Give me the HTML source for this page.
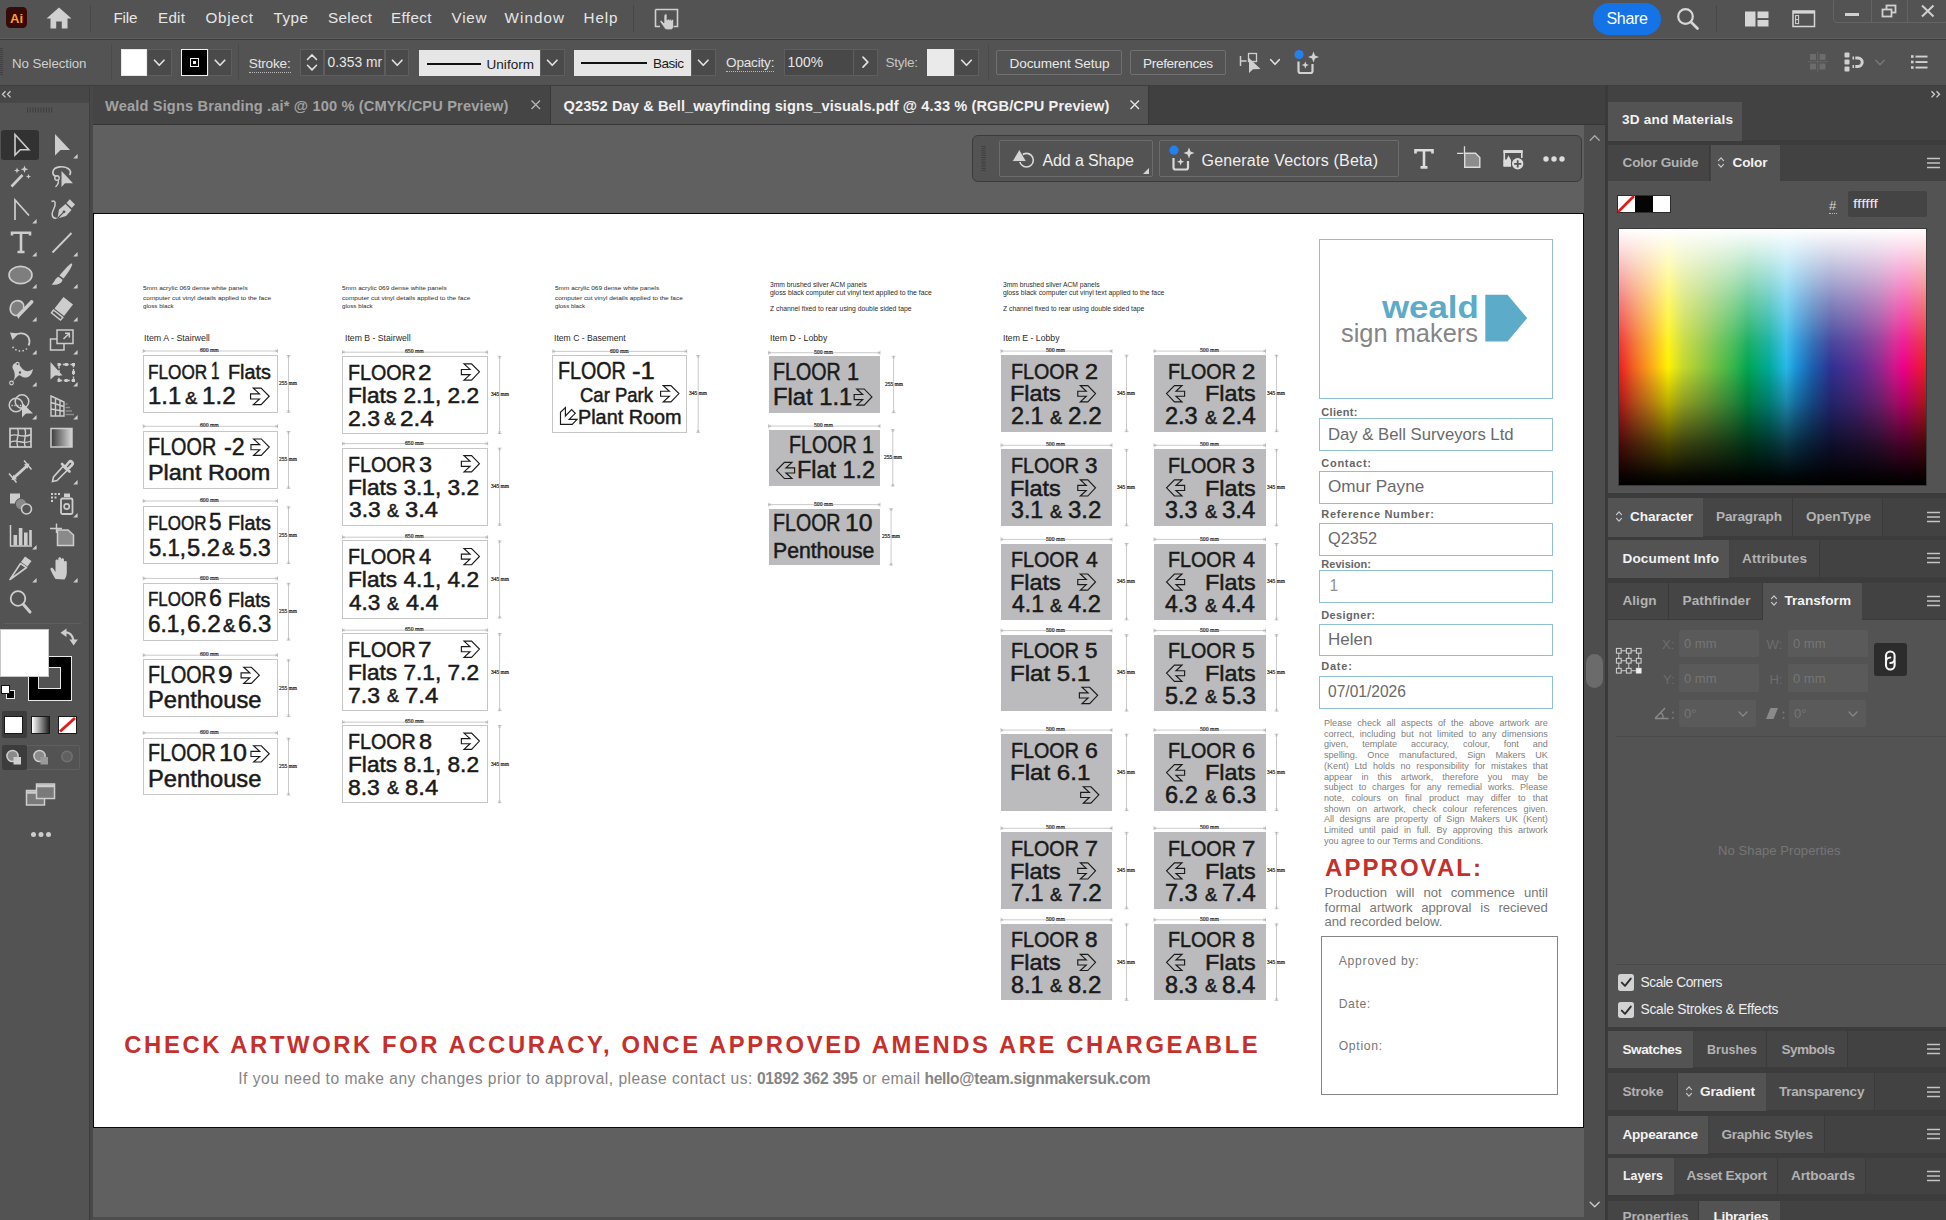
<!DOCTYPE html>
<html lang="en"><head><meta charset="utf-8"><title>Adobe Illustrator</title><style>
html,body{margin:0;padding:0}
body{width:1946px;height:1220px;overflow:hidden;background:#606060;position:relative;font-family:"Liberation Sans",sans-serif;}
.t{position:absolute;white-space:nowrap;line-height:1;}
.r{position:absolute;box-sizing:border-box;}
svg.r{overflow:visible}
</style></head><body>
<div class="r" style="left:0.00px;top:0.00px;width:1946.00px;height:38.00px;background:#535353;"></div>
<div class="r" style="left:0.00px;top:38.50px;width:1946.00px;height:1.70px;background:#3b3b3b;"></div>
<div class="r" style="left:0.00px;top:40.00px;width:1946.00px;height:45.00px;background:#535353;"></div>
<div class="r" style="left:0.00px;top:85.00px;width:1946.00px;height:1.00px;background:#3d3d3d;"></div>
<div class="r" style="left:5.80px;top:7.30px;width:21.40px;height:20.60px;background:#360a06;border-radius:4.5px;"></div>
<span class="t" style="left:10.00px;top:11.80px;font-size:13px;color:#ff9f32;font-weight:700;letter-spacing:0.000px;">Ai</span>
<svg class="r" style="left:44.00px;top:5.00px;" width="30" height="26" viewBox="0 0 30 26"><path d="M15 2.5 L2.5 13.5 H6.5 V23.5 H12.2 V16.5 H17.8 V23.5 H23.5 V13.5 H27.5 Z" fill="#d0d0d0"/></svg>
<div class="r" style="left:90.00px;top:5.00px;width:1.00px;height:27.00px;background:#474747;"></div>
<span class="t" style="left:113.50px;top:9.83px;font-size:15.2px;color:#e6e6e6;letter-spacing:-0.164px;">File</span>
<span class="t" style="left:158.00px;top:9.83px;font-size:15.2px;color:#e6e6e6;letter-spacing:0.269px;">Edit</span>
<span class="t" style="left:205.50px;top:9.83px;font-size:15.2px;color:#e6e6e6;letter-spacing:0.714px;">Object</span>
<span class="t" style="left:273.50px;top:9.83px;font-size:15.2px;color:#e6e6e6;letter-spacing:0.516px;">Type</span>
<span class="t" style="left:328.00px;top:9.83px;font-size:15.2px;color:#e6e6e6;letter-spacing:0.351px;">Select</span>
<span class="t" style="left:391.00px;top:9.83px;font-size:15.2px;color:#e6e6e6;letter-spacing:0.383px;">Effect</span>
<span class="t" style="left:451.50px;top:9.83px;font-size:15.2px;color:#e6e6e6;letter-spacing:0.776px;">View</span>
<span class="t" style="left:504.50px;top:9.83px;font-size:15.2px;color:#e6e6e6;letter-spacing:1.088px;">Window</span>
<span class="t" style="left:583.50px;top:9.83px;font-size:15.2px;color:#e6e6e6;letter-spacing:0.913px;">Help</span>
<div class="r" style="left:633.00px;top:5.00px;width:1.00px;height:27.00px;background:#474747;"></div>
<svg class="r" style="left:652.00px;top:5.00px;" width="30" height="28" viewBox="0 0 30 28"><path d="M3.5 4.5 H25.5 V21.5 H21" fill="none" stroke="#d0d0d0" stroke-width="1.6"/><path d="M3.5 4.5 V21.5 H8" fill="none" stroke="#d0d0d0" stroke-width="1.6"/>
    <path d="M12 10 v8 l-2.2-2.2 c-1-1-2.4 .2-1.6 1.3 l4.3 6.2 c.6 .9 1.5 1.4 2.6 1.4 h3.2 c1.8 0 3.2-1.4 3.2-3.2 v-6 c0-1.3-1.9-1.4-2-.1 c0-1.6-2.1-1.7-2.2-.2 c0-1.6-2.2-1.7-2.3-.1 v-5.1 c0-1.6-2.3-1.6-2.3 0z" fill="#d0d0d0" stroke="#535353" stroke-width=".6"/></svg>
<div class="r" style="left:1593.00px;top:3.00px;width:68.00px;height:31.50px;background:#1473e6;border-radius:16px;"></div>
<span class="t" style="left:1606.50px;top:10.86px;font-size:16px;color:#ffffff;letter-spacing:-0.299px;">Share</span>
<svg class="r" style="left:1674.00px;top:5.00px;" width="28" height="28" viewBox="0 0 28 28"><circle cx="11.5" cy="11.5" r="7.3" fill="none" stroke="#d6d6d6" stroke-width="2.2"/><path d="M17 17 L23.5 23.5" stroke="#d6d6d6" stroke-width="2.8" stroke-linecap="round"/></svg>
<div class="r" style="left:1716.00px;top:5.00px;width:1.00px;height:27.00px;background:#474747;"></div>
<svg class="r" style="left:1744.00px;top:10.00px;" width="26" height="18" viewBox="0 0 26 18"><rect x="1" y="1.5" width="10.5" height="15" fill="#d6d6d6"/><rect x="13.5" y="1.5" width="11" height="6.6" fill="#d6d6d6"/><rect x="13.5" y="10" width="11" height="6.5" fill="#d6d6d6"/></svg>
<svg class="r" style="left:1791.00px;top:9.00px;" width="26" height="20" viewBox="0 0 26 20"><rect x="2" y="2" width="21.5" height="15.5" fill="none" stroke="#d6d6d6" stroke-width="1.5"/><rect x="2" y="2" width="21.5" height="2.6" fill="#d6d6d6"/><rect x="4.6" y="6.6" width="3" height="8" fill="none" stroke="#d6d6d6" stroke-width="1"/><path d="M4.6 10.6 h3" stroke="#d6d6d6" stroke-width="1"/></svg>
<div class="r" style="left:1832.50px;top:-2.00px;width:116.00px;height:25.00px;border:1px solid #646464;border-radius:4px;"></div>
<div class="r" style="left:1870.50px;top:0.00px;width:1.00px;height:23.00px;background:#646464;"></div>
<div class="r" style="left:1907.00px;top:0.00px;width:1.00px;height:23.00px;background:#646464;"></div>
<div class="r" style="left:1845.00px;top:12.50px;width:14.00px;height:3.00px;background:#d0d0d0;"></div>
<svg class="r" style="left:1879.00px;top:3.00px;" width="22" height="18" viewBox="0 0 22 18"><rect x="7.5" y="2.5" width="9" height="7" fill="none" stroke="#d0d0d0" stroke-width="1.8"/><rect x="3.5" y="6.5" width="9" height="7" fill="#535353" stroke="#d0d0d0" stroke-width="1.8"/></svg>
<svg class="r" style="left:1918.00px;top:2.00px;" width="20" height="18" viewBox="0 0 20 18"><path d="M4 3.5 L15.5 14.5 M15.5 3.5 L4 14.5" stroke="#d0d0d0" stroke-width="2"/></svg>
<svg class="r" style="left:0.00px;top:46.00px;" width="4" height="32" viewBox="0 0 4 32"><path d="M1.5 2 V30" stroke="#3f3f3f" stroke-width="3" stroke-dasharray="1 1"/></svg>
<span class="t" style="left:12.00px;top:57.14px;font-size:13.3px;color:#cfcfcf;letter-spacing:-0.083px;">No Selection</span>
<div class="r" style="left:111.00px;top:44.00px;width:1.00px;height:36.00px;background:#4a4a4a;"></div>
<div class="r" style="left:120.50px;top:49.00px;width:26.50px;height:26.50px;background:#ffffff;border:1px solid #e8e8e8;"></div>
<div class="r" style="left:147.00px;top:49.00px;width:24.50px;height:26.50px;background:#4a4a4a;border:1px solid #5e5e5e;"></div>
<svg class="r" style="left:147.00px;top:49.00px;" width="24.5" height="26.5" viewBox="0 0 24.5 26.5"><path d="M7.5,11.25 L12.25,16.25 L17.0,11.25" fill="none" stroke="#e0e0e0" stroke-width="1.7" stroke-linecap="round" stroke-linejoin="round"/></svg>
<div class="r" style="left:181.00px;top:49.00px;width:26.50px;height:26.50px;background:#000000;border:1.5px solid #f0f0f0;"></div>
<div class="r" style="left:189.50px;top:57.50px;width:9.50px;height:9.50px;border:1.6px solid #f0f0f0;"></div>
<div class="r" style="left:192.60px;top:60.60px;width:3.30px;height:3.30px;background:#f0f0f0;"></div>
<div class="r" style="left:207.50px;top:49.00px;width:24.00px;height:26.50px;background:#4a4a4a;border:1px solid #5e5e5e;"></div>
<svg class="r" style="left:207.50px;top:49.00px;" width="24" height="26.5" viewBox="0 0 24 26.5"><path d="M7.25,11.25 L12.0,16.25 L16.75,11.25" fill="none" stroke="#e0e0e0" stroke-width="1.7" stroke-linecap="round" stroke-linejoin="round"/></svg>
<div class="r" style="left:238.00px;top:44.00px;width:1.00px;height:36.00px;background:#4a4a4a;"></div>
<span class="t" style="left:248.80px;top:56.89px;font-size:13.6px;color:#e4e4e4;letter-spacing:-0.181px;border-bottom:1px dotted #b8b8b8;padding-bottom:1.5px;">Stroke:</span>
<div class="r" style="left:300.00px;top:49.00px;width:24.00px;height:26.50px;background:#4a4a4a;border:1px solid #5e5e5e;"></div>
<svg class="r" style="left:300.00px;top:49.00px;" width="24" height="26.5" viewBox="0 0 24 26.5"><path d="M7.5,10.5 L12,5.8999999999999995 L16.5,10.5" fill="none" stroke="#e0e0e0" stroke-width="1.6" stroke-linecap="round" stroke-linejoin="round"/><path d="M7.5,16.3 L12,20.900000000000002 L16.5,16.3" fill="none" stroke="#e0e0e0" stroke-width="1.6" stroke-linecap="round" stroke-linejoin="round"/></svg>
<div class="r" style="left:323.50px;top:49.00px;width:61.50px;height:26.50px;background:#484848;border:1px solid #5e5e5e;"></div>
<span class="t" style="left:327.50px;top:55.62px;font-size:13.8px;color:#e6e6e6;letter-spacing:0.006px;">0.353 mr</span>
<div class="r" style="left:384.50px;top:49.00px;width:24.50px;height:26.50px;background:#4a4a4a;border:1px solid #5e5e5e;"></div>
<svg class="r" style="left:384.50px;top:49.00px;" width="24.5" height="26.5" viewBox="0 0 24.5 26.5"><path d="M7.5,11.25 L12.25,16.25 L17.0,11.25" fill="none" stroke="#e0e0e0" stroke-width="1.7" stroke-linecap="round" stroke-linejoin="round"/></svg>
<div class="r" style="left:419.00px;top:50.00px;width:120.50px;height:25.50px;background:#e6e6e6;"></div>
<div class="r" style="left:427.00px;top:63.00px;width:53.50px;height:1.80px;background:#111;"></div>
<span class="t" style="left:486.50px;top:58.37px;font-size:13.5px;color:#1a1a1a;letter-spacing:0.041px;">Uniform</span>
<div class="r" style="left:540.00px;top:49.00px;width:24.50px;height:26.50px;background:#4a4a4a;border:1px solid #5e5e5e;"></div>
<svg class="r" style="left:540.00px;top:49.00px;" width="24.5" height="26.5" viewBox="0 0 24.5 26.5"><path d="M7.5,11.25 L12.25,16.25 L17.0,11.25" fill="none" stroke="#e0e0e0" stroke-width="1.7" stroke-linecap="round" stroke-linejoin="round"/></svg>
<div class="r" style="left:573.50px;top:50.00px;width:117.00px;height:25.50px;background:#e6e6e6;"></div>
<div class="r" style="left:581.00px;top:62.20px;width:66.00px;height:2.00px;background:#111;"></div>
<span class="t" style="left:653.00px;top:57.37px;font-size:13.5px;color:#1a1a1a;letter-spacing:-0.503px;">Basic</span>
<div class="r" style="left:691.00px;top:49.00px;width:24.50px;height:26.50px;background:#4a4a4a;border:1px solid #5e5e5e;"></div>
<svg class="r" style="left:691.00px;top:49.00px;" width="24.5" height="26.5" viewBox="0 0 24.5 26.5"><path d="M7.5,11.25 L12.25,16.25 L17.0,11.25" fill="none" stroke="#e0e0e0" stroke-width="1.7" stroke-linecap="round" stroke-linejoin="round"/></svg>
<span class="t" style="left:726.00px;top:55.99px;font-size:13.6px;color:#e4e4e4;letter-spacing:-0.198px;border-bottom:1px dotted #b8b8b8;padding-bottom:1.5px;">Opacity:</span>
<div class="r" style="left:783.50px;top:49.00px;width:70.00px;height:26.50px;background:#484848;border:1px solid #5e5e5e;"></div>
<span class="t" style="left:787.50px;top:55.62px;font-size:13.8px;color:#e6e6e6;letter-spacing:0.068px;">100%</span>
<div class="r" style="left:853.00px;top:49.00px;width:24.50px;height:26.50px;background:#4a4a4a;border:1px solid #5e5e5e;"></div>
<svg class="r" style="left:853.00px;top:49.00px;" width="24.5" height="26.5" viewBox="0 0 24.5 26.5"><path d="M10 8.2 L14.8 13.2 L10 18.2" fill="none" stroke="#e0e0e0" stroke-width="1.7" stroke-linecap="round" stroke-linejoin="round"/></svg>
<span class="t" style="left:885.50px;top:55.79px;font-size:13.6px;color:#c4c4c4;letter-spacing:-0.303px;">Style:</span>
<div class="r" style="left:927.00px;top:49.00px;width:26.50px;height:26.50px;background:#eaeaea;"></div>
<div class="r" style="left:953.50px;top:49.00px;width:25.00px;height:26.50px;background:#4a4a4a;border:1px solid #5e5e5e;"></div>
<svg class="r" style="left:953.50px;top:49.00px;" width="25" height="26.5" viewBox="0 0 25 26.5"><path d="M7.75,11.25 L12.5,16.25 L17.25,11.25" fill="none" stroke="#e0e0e0" stroke-width="1.7" stroke-linecap="round" stroke-linejoin="round"/></svg>
<div class="r" style="left:988.00px;top:44.00px;width:1.00px;height:36.00px;background:#4a4a4a;"></div>
<div class="r" style="left:996.00px;top:50.00px;width:126.00px;height:25.00px;border:1px solid #707070;border-radius:2px;"></div>
<span class="t" style="left:1009.50px;top:56.99px;font-size:13.6px;color:#e8e8e8;letter-spacing:-0.100px;">Document Setup</span>
<div class="r" style="left:1130.00px;top:50.00px;width:95.50px;height:25.00px;border:1px solid #707070;border-radius:2px;"></div>
<span class="t" style="left:1143.00px;top:56.99px;font-size:13.6px;color:#e8e8e8;letter-spacing:-0.333px;">Preferences</span>
<svg class="r" style="left:1238.00px;top:49.00px;" width="28" height="28" viewBox="0 0 28 28"><rect x="10.5" y="4.5" width="8" height="8" fill="none" stroke="#cfcfcf" stroke-width="1.3"/>
    <path d="M2.5 7 v10 M2.5 12 h6" stroke="#cfcfcf" stroke-width="1.5" fill="none"/>
    <path d="M11 9 L11 24 L15 20.2 L22.5 20 Z" fill="#cfcfcf"/></svg>
<svg class="r" style="left:1268.00px;top:56.00px;" width="14" height="12" viewBox="0 0 14 12"><path d="M2.75,3.7 L7,8.3 L11.25,3.7" fill="none" stroke="#e0e0e0" stroke-width="1.6" stroke-linecap="round" stroke-linejoin="round"/></svg>
<svg class="r" style="left:1292.00px;top:47.00px;" width="30" height="30" viewBox="0 0 30 30"><path d="M6.5 14.5 V24 q0 2 2 2 H18.5 q2 0 2-2 V17" fill="none" stroke="#d2d2d2" stroke-width="2.2"/>
    <path d="M21.5 4.5 l1.5 4 l4 1.5 l-4 1.5 l-1.5 4 l-1.5-4 l-4-1.5 l4-1.5z" fill="#d2d2d2"/>
    <path d="M13.3 14.5 l1 2.6 l2.6 1 l-2.6 1 l-1 2.6 l-1-2.6 l-2.6-1 l2.6-1z" fill="#d2d2d2"/>
    <circle cx="7" cy="7.5" r="4.6" fill="#2680eb"/></svg>
<svg class="r" style="left:1808.00px;top:52.00px;" width="20" height="20" viewBox="0 0 20 20"><g fill="#6c6c6c"><rect x="2" y="2" width="6" height="6"/><rect x="11.5" y="2" width="6" height="6"/><rect x="2" y="11.5" width="6" height="6"/><rect x="11.5" y="11.5" width="6" height="6"/></g><path d="M9.7 0 V20 M0 9.7 H20" stroke="#6c6c6c" stroke-width="0.8"/></svg>
<svg class="r" style="left:1842.00px;top:51.00px;" width="26" height="22" viewBox="0 0 26 22"><g fill="#d0d0d0"><rect x="2.5" y="1.5" width="5" height="5" rx="1"/><rect x="2.5" y="8.5" width="5" height="5" rx="1"/><rect x="2.5" y="15.5" width="5" height="5" rx="1"/></g>
    <path d="M10.5 7 H16 a4.2 4.2 0 0 1 0 8.4 H10.5" fill="none" stroke="#d0d0d0" stroke-width="3"/><path d="M12.7 5 v12" stroke="#535353" stroke-width="1.2"/></svg>
<svg class="r" style="left:1873.00px;top:57.00px;" width="14" height="12" viewBox="0 0 14 12"><path d="M2.75,3.2 L7,7.8 L11.25,3.2" fill="none" stroke="#767676" stroke-width="1.5" stroke-linecap="round" stroke-linejoin="round"/></svg>
<svg class="r" style="left:1910.00px;top:53.00px;" width="20" height="18" viewBox="0 0 20 18"><g fill="#d0d0d0"><rect x="1" y="2.2" width="2.6" height="2.6"/><rect x="1" y="7.7" width="2.6" height="2.6"/><rect x="1" y="13.2" width="2.6" height="2.6"/>
    <rect x="5.5" y="2.6" width="12" height="1.9"/><rect x="5.5" y="8.1" width="12" height="1.9"/><rect x="5.5" y="13.6" width="12" height="1.9"/></g></svg>
<div class="r" style="left:92.00px;top:86.00px;width:1516.00px;height:39.00px;background:#404040;"></div>
<div class="r" style="left:92.00px;top:123.60px;width:1516.00px;height:1.90px;background:#363636;"></div>
<div class="r" style="left:92.00px;top:86.00px;width:457.50px;height:38.00px;background:#454545;"></div>
<span class="t" style="left:105.00px;top:98.64px;font-size:14.6px;color:#a2a2a2;font-weight:700;letter-spacing:0.161px;">Weald Signs Branding .ai* @ 100 % (CMYK/CPU Preview)</span>
<svg class="r" style="left:529.00px;top:98.00px;" width="14" height="14" viewBox="0 0 14 14"><path d="M2.5 2.5 L11 11 M11 2.5 L2.5 11" stroke="#b4b4b4" stroke-width="1.4"/></svg>
<div class="r" style="left:549.50px;top:86.00px;width:1.00px;height:38.00px;background:#383838;"></div>
<div class="r" style="left:550.50px;top:86.00px;width:597.50px;height:37.60px;background:#535353;"></div>
<span class="t" style="left:563.50px;top:98.64px;font-size:14.6px;color:#f0f0f0;font-weight:700;letter-spacing:0.096px;">Q2352 Day &amp; Bell_wayfinding signs_visuals.pdf @ 4.33 % (RGB/CPU Preview)</span>
<svg class="r" style="left:1127.50px;top:98.00px;" width="14" height="14" viewBox="0 0 14 14"><path d="M2.5 2.5 L11 11 M11 2.5 L2.5 11" stroke="#e6e6e6" stroke-width="1.4"/></svg>
<div class="r" style="left:1148.00px;top:86.00px;width:1.00px;height:38.00px;background:#383838;"></div>
<div class="r" style="left:0.00px;top:86.00px;width:89.00px;height:1134.00px;background:#535353;"></div>
<div class="r" style="left:0.00px;top:86.00px;width:89.00px;height:15.50px;background:#474747;"></div>
<div class="r" style="left:0.00px;top:101.50px;width:89.00px;height:1.50px;background:#494949;"></div>
<div class="r" style="left:89.00px;top:86.00px;width:3.50px;height:1134.00px;background:#484848;"></div>
<div class="r" style="left:89.00px;top:86.00px;width:1.00px;height:1134.00px;background:#3e3e3e;"></div>
<svg class="r" style="left:1.00px;top:90.00px;" width="12" height="9" viewBox="0 0 12 9"><path d="M4.5 1.2 L1.5 4.3 L4.5 7.4 M9.5 1.2 L6.5 4.3 L9.5 7.4" fill="none" stroke="#cfcfcf" stroke-width="1.3"/></svg>
<svg class="r" style="left:26.00px;top:106.00px;" width="30" height="8" viewBox="0 0 30 8"><path d="M1 4 H28" stroke="#3c3c3c" stroke-width="5" stroke-dasharray="1 1.7"/></svg>
<div class="r" style="left:1.30px;top:130.00px;width:37.70px;height:29.50px;background:#323232;border-radius:3px;"></div>
<svg class="r" style="left:6.50px;top:130.60px;" width="28" height="28" viewBox="0 0 28 28"><path d="M8 3.5 V24 L13.3 18.8 L21.8 18.8 Z" stroke="#cdcdcd" fill="none" stroke-width="1.6" stroke-linejoin="miter"/></svg>
<svg class="r" style="left:48.00px;top:130.60px;" width="28" height="28" viewBox="0 0 28 28"><path d="M7 3 V24.5 L12.5 19 L22 19 Z" fill="#cdcdcd"/><path d="M29.6 27.4 h-4.4 l4.4-4.4z" fill="#cdcdcd"/></svg>
<svg class="r" style="left:6.50px;top:163.25px;" width="28" height="28" viewBox="0 0 28 28"><path d="M4.5 23.5 L15.5 12" stroke="#cdcdcd" stroke-width="2.6" stroke-linecap="butt"/><path d="M17.5 2.5 l1 2.8 l2.8 1 l-2.8 1 l-1 2.8 l-1-2.8 l-2.8-1 l2.8-1z M10 4.5 l.8 2.2 l2.2 .8 l-2.2 .8 l-.8 2.2 l-.8-2.2 l-2.2-.8 l2.2-.8z M21.5 11 l.7 1.8 l1.8 .7 l-1.8 .7 l-.7 1.8 l-.7-1.8 l-1.8-.7 l1.8-.7z" fill="#cdcdcd"/></svg>
<svg class="r" style="left:48.00px;top:163.25px;" width="28" height="28" viewBox="0 0 28 28"><path d="M8.5 13.5 C3 12 3.5 4.5 12 3.8 C20 3.2 24.5 8 21.5 12" stroke="#cdcdcd" fill="none" stroke-width="1.7"/><circle cx="9" cy="15" r="2.2" stroke="#cdcdcd" fill="none" stroke-width="1.4"/><path d="M10 17 C11.5 20 9 22.5 7.5 24" stroke="#cdcdcd" fill="none" stroke-width="1.4"/><path d="M13.5 8 V24 L17 20.3 L25 20.3 Z" fill="#cdcdcd"/></svg>
<svg class="r" style="left:6.50px;top:195.90px;" width="28" height="28" viewBox="0 0 28 28"><path d="M8 24 V4 L22 19.5" stroke="#cdcdcd" fill="none" stroke-width="1.7" stroke-linejoin="miter"/><path d="M29.6 27.4 h-4.4 l4.4-4.4z" fill="#cdcdcd"/></svg>
<svg class="r" style="left:48.00px;top:195.90px;" width="28" height="28" viewBox="0 0 28 28"><path d="M3.5 5.5 C8 3 8 9 5.5 13.5 C3 18 4 23 8.5 22" stroke="#cdcdcd" fill="none" stroke-width="1.5"/><path d="M9.5 22.5 L11 13.5 L17.5 8 L23.5 14 L18 20 Z" fill="#cdcdcd"/><path d="M18.5 7 L21.8 3.2 L27 8.5 L23.8 12 Z" fill="#cdcdcd"/><path d="M10 22 L15.5 16.3" stroke="#535353" stroke-width="1.2"/><circle cx="16" cy="15.8" r="1.4" fill="#535353"/></svg>
<svg class="r" style="left:6.50px;top:228.55px;" width="28" height="28" viewBox="0 0 28 28"><path d="M5 6.5 V3.8 H23 V6.5 M14 3.8 V23 M10.5 23 H17.5" stroke="#cdcdcd" fill="none" stroke-width="2.6"/><path d="M29.6 27.4 h-4.4 l4.4-4.4z" fill="#cdcdcd"/></svg>
<svg class="r" style="left:48.00px;top:228.55px;" width="28" height="28" viewBox="0 0 28 28"><path d="M4.5 23.5 L23.5 4" stroke="#cdcdcd" stroke-width="1.8"/><path d="M29.6 27.4 h-4.4 l4.4-4.4z" fill="#cdcdcd"/></svg>
<svg class="r" style="left:6.50px;top:261.20px;" width="28" height="28" viewBox="0 0 28 28"><ellipse cx="13.5" cy="14" rx="11.5" ry="8.6" fill="#7e7e7e" stroke="#cdcdcd" stroke-width="1.6"/><path d="M29.6 27.4 h-4.4 l4.4-4.4z" fill="#cdcdcd"/></svg>
<svg class="r" style="left:48.00px;top:261.20px;" width="28" height="28" viewBox="0 0 28 28"><path d="M24 2.5 C25.5 4 19 13 15.5 17.5 L11.5 14.5 C15 10 22.5 1.5 24 2.5Z" fill="#cdcdcd"/><path d="M10.5 15.8 L14.5 18.8 C14 23 8 24.5 3.5 23.5 C6.5 22 6.5 17.5 10.5 15.8Z" fill="#cdcdcd"/><path d="M29.6 27.4 h-4.4 l4.4-4.4z" fill="#cdcdcd"/></svg>
<svg class="r" style="left:6.50px;top:293.85px;" width="28" height="28" viewBox="0 0 28 28"><path d="M11 21.5 C4 22 2 16 4 11 C6 6 13 5 16 9.5 C17 11 17 12.5 16.5 14" fill="#7e7e7e" stroke="#cdcdcd" stroke-width="1.6"/><path d="M11.5 25 L9.5 21 L23.5 6.5 C25 5 27.5 7.5 26 9 L12.5 23 Z" fill="#cdcdcd"/><path d="M29.6 27.4 h-4.4 l4.4-4.4z" fill="#cdcdcd"/></svg>
<svg class="r" style="left:48.00px;top:293.85px;" width="28" height="28" viewBox="0 0 28 28"><path d="M15.5 3 L25 10.5 L16 22 L6.5 14.5 Z" fill="#cdcdcd"/><path d="M5.5 16 L14.8 23.4 L12.5 26 L3.5 18.8 Z" fill="none" stroke="#cdcdcd" stroke-width="1.5"/><path d="M29.6 27.4 h-4.4 l4.4-4.4z" fill="#cdcdcd"/></svg>
<svg class="r" style="left:6.50px;top:326.50px;" width="28" height="28" viewBox="0 0 28 28"><path d="M7 9 C11 5 19 5.5 21.8 11 C23 14 22.5 16.5 21.5 18.5" stroke="#cdcdcd" fill="none" stroke-width="1.8"/><path d="M3 5.5 L11.5 6.5 L5.5 13 Z" fill="#cdcdcd"/><path d="M20 21.5 C16 25.5 8.5 24.5 5.5 19.5" stroke="#cdcdcd" fill="none" stroke-width="1.5" stroke-dasharray="1.5 2.2"/><path d="M29.6 27.4 h-4.4 l4.4-4.4z" fill="#cdcdcd"/></svg>
<svg class="r" style="left:48.00px;top:326.50px;" width="28" height="28" viewBox="0 0 28 28"><rect x="2.5" y="12" width="13.5" height="11" stroke="#cdcdcd" fill="none" stroke-width="1.5"/><rect x="9" y="3" width="16" height="13.5" fill="#535353" stroke="#cdcdcd" stroke-width="1.5"/><path d="M15.5 12 L21 6.5 M17 6.2 H21.3 V10.5" stroke="#cdcdcd" fill="none" stroke-width="1.5"/><path d="M29.6 27.4 h-4.4 l4.4-4.4z" fill="#cdcdcd"/></svg>
<svg class="r" style="left:6.50px;top:359.15px;" width="28" height="28" viewBox="0 0 28 28"><path d="M5 24 C9 19 8 13 6 10 C4 6 8.5 1.5 12 5.5 C15 9.5 18.5 15.5 26 10 C25 17 19.5 21 14 17 C12 15.5 11 16 5 24Z" fill="#cdcdcd"/><circle cx="4.5" cy="24" r="1.8" fill="#535353" stroke="#cdcdcd" stroke-width="1.2"/><circle cx="13" cy="13.5" r="1.8" fill="#535353" stroke="#cdcdcd" stroke-width="1.2"/><circle cx="10.5" cy="5" r="1.6" fill="#535353" stroke="#cdcdcd" stroke-width="1.2"/><path d="M29.6 27.4 h-4.4 l4.4-4.4z" fill="#cdcdcd"/></svg>
<svg class="r" style="left:48.00px;top:359.15px;" width="28" height="28" viewBox="0 0 28 28"><rect x="11" y="5.5" width="14.5" height="16" stroke="#cdcdcd" fill="none" stroke-width="1.4" stroke-dasharray="2.2 1.6"/><g fill="#cdcdcd"><rect x="9.5" y="4" width="3" height="3"/><rect x="24" y="4" width="3" height="3"/><rect x="24" y="20" width="3" height="3"/><rect x="16.8" y="20" width="3" height="3"/><rect x="24" y="12" width="3" height="3"/><rect x="16.8" y="4" width="3" height="3"/><rect x="9.5" y="20" width="3" height="3"/></g><path d="M2.5 3 V20.5 L7 16.5 L14.5 16.5 Z" fill="#cdcdcd"/><path d="M29.6 27.4 h-4.4 l4.4-4.4z" fill="#cdcdcd"/></svg>
<svg class="r" style="left:6.50px;top:391.80px;" width="28" height="28" viewBox="0 0 28 28"><circle cx="9" cy="13" r="6.8" stroke="#cdcdcd" fill="none" stroke-width="1.5"/><circle cx="15" cy="9.5" r="6.8" stroke="#cdcdcd" fill="none" stroke-width="1.5"/><path d="M4.5 13.5 H15" stroke="#cdcdcd" fill="none" stroke-width="1.5" stroke-dasharray="1.3 1.5"/><path d="M15 10.5 V25.5 L19 21.5 L26 21.5 Z" fill="#cdcdcd"/><path d="M29.6 27.4 h-4.4 l4.4-4.4z" fill="#cdcdcd"/></svg>
<svg class="r" style="left:48.00px;top:391.80px;" width="28" height="28" viewBox="0 0 28 28"><path d="M3 4 L16 10 V24 H3 Z M3 10.5 L16 14.5 M3 17 L16 19.2 M7.5 6 V24 M12 8.2 V24" stroke="#cdcdcd" fill="none" stroke-width="1.4"/><path d="M17.5 12 H19.5 M17.5 15.5 H22 M17.5 19 H24 M17.5 22.5 H26" stroke="#8c8c8c" stroke-width="1.3"/><path d="M29.6 27.4 h-4.4 l4.4-4.4z" fill="#cdcdcd"/></svg>
<svg class="r" style="left:6.50px;top:424.45px;" width="28" height="28" viewBox="0 0 28 28"><rect x="3" y="4.5" width="21" height="18.5" stroke="#cdcdcd" fill="none" stroke-width="1.7"/><path d="M3 12 C9 8 15 15 24 10.5 M3 18.5 C10 14 16 21.5 24 17 M10.5 4.5 C13.5 10.5 7.5 16 11 23 M17.5 4.5 C21 10 15 17 18.5 23" stroke="#cdcdcd" fill="none" stroke-width="1.4"/></svg>
<svg class="r" style="left:48.00px;top:424.45px;" width="28" height="28" viewBox="0 0 28 28"><defs><linearGradient id="tg" x1="0" x2="1"><stop offset="0" stop-color="#3a3a3a"/><stop offset="1" stop-color="#d8d8d8"/></linearGradient></defs><rect x="3" y="4.5" width="21" height="18.5" fill="url(#tg)" stroke="#cdcdcd" stroke-width="1.5"/></svg>
<svg class="r" style="left:6.50px;top:457.10px;" width="28" height="28" viewBox="0 0 28 28"><path d="M6 21.5 L21 8" stroke="#cdcdcd" stroke-width="3"/><path d="M2 16.5 L9.5 25.5 M17 3.5 L24.5 12.5" stroke="#cdcdcd" stroke-width="1.5"/><path d="M4.5 23 L6.3 17.8 L10 22.3Z M22.5 6.5 L20.6 11.7 L17 7.3Z" fill="#cdcdcd"/></svg>
<svg class="r" style="left:48.00px;top:457.10px;" width="28" height="28" viewBox="0 0 28 28"><path d="M4.5 24.5 L5.5 20 L15 9.5 L19 13.5 L9 23.5 Z" stroke="#cdcdcd" fill="none" stroke-width="1.6"/><path d="M14 7 L21.5 14.5 M17 10 L21 5 C23 3 26 6 24 8 L19.5 12.5" stroke="#cdcdcd" stroke-width="2.6" fill="none" stroke-linecap="round"/><path d="M29.6 27.4 h-4.4 l4.4-4.4z" fill="#cdcdcd"/></svg>
<svg class="r" style="left:6.50px;top:489.75px;" width="28" height="28" viewBox="0 0 28 28"><rect x="3" y="3.5" width="10" height="10" fill="#cdcdcd"/><circle cx="14" cy="14" r="5.6" fill="#8a8a8a" stroke="#535353" stroke-width="1"/><circle cx="19.5" cy="19" r="5" fill="#535353" stroke="#cdcdcd" stroke-width="1.6"/></svg>
<svg class="r" style="left:48.00px;top:489.75px;" width="28" height="28" viewBox="0 0 28 28"><rect x="13" y="8.5" width="11.5" height="15.5" rx="1.5" stroke="#cdcdcd" fill="none" stroke-width="1.8"/><circle cx="18.7" cy="16.5" r="2.6" stroke="#cdcdcd" fill="none" stroke-width="1.6"/><rect x="16" y="3.5" width="6" height="3.6" fill="#cdcdcd"/><g fill="#cdcdcd"><rect x="3" y="3" width="2" height="2"/><rect x="6.5" y="3" width="2" height="2"/><rect x="10" y="3" width="2" height="2"/><rect x="3" y="6.5" width="2" height="2"/><rect x="6.5" y="6.5" width="2" height="2"/><rect x="3" y="10" width="2" height="2"/></g><path d="M29.6 27.4 h-4.4 l4.4-4.4z" fill="#cdcdcd"/></svg>
<svg class="r" style="left:6.50px;top:522.40px;" width="28" height="28" viewBox="0 0 28 28"><path d="M3.5 3 V24 H25" stroke="#cdcdcd" fill="none" stroke-width="1.5"/><g fill="#cdcdcd"><rect x="6.5" y="13" width="3.6" height="10.5"/><rect x="11.8" y="6" width="3.6" height="17.5"/><rect x="17" y="10.5" width="3.6" height="13"/><rect x="22.2" y="8" width="2.6" height="15.5"/></g><path d="M29.6 27.4 h-4.4 l4.4-4.4z" fill="#cdcdcd"/></svg>
<svg class="r" style="left:48.00px;top:522.40px;" width="28" height="28" viewBox="0 0 28 28"><path d="M8.5 1.5 V11 M2 6.5 H14" stroke="#cdcdcd" stroke-width="1.4"/><path d="M9.5 8 H20 L25.5 13 V23.5 H9.5 Z" fill="#8a8a8a" stroke="#cdcdcd" stroke-width="1.5"/></svg>
<svg class="r" style="left:6.50px;top:555.05px;" width="28" height="28" viewBox="0 0 28 28"><path d="M3 24.5 L13.5 8.5 L19.5 12.5 Z" stroke="#cdcdcd" fill="none" stroke-width="1.6" stroke-linejoin="round"/><path d="M14 7 L18 1.5 L24.5 6 L20.5 11.5 Z" fill="#cdcdcd"/><path d="M29.6 27.4 h-4.4 l4.4-4.4z" fill="#cdcdcd"/></svg>
<svg class="r" style="left:48.00px;top:555.05px;" width="28" height="28" viewBox="0 0 28 28"><path d="M7.5 24 C5 20 3.5 17 2.5 14.5 C2 12.5 4.5 12 5.5 14 L7.5 17 V6 C7.5 4 10.3 4 10.3 6 V12 V3.8 C10.3 1.8 13.2 1.8 13.2 3.8 V12 V4.8 C13.2 2.8 16 2.8 16 4.8 V12.5 V7.5 C16 5.6 18.8 5.6 18.8 7.5 V17 C18.8 21 17.5 23 16.5 24.5 Z" fill="#cdcdcd"/><path d="M29.6 27.4 h-4.4 l4.4-4.4z" fill="#cdcdcd"/></svg>
<svg class="r" style="left:6.50px;top:587.55px;" width="28" height="28" viewBox="0 0 28 28"><circle cx="11" cy="10.5" r="7.3" stroke="#cdcdcd" fill="none" stroke-width="1.8"/><path d="M16.5 16.5 L23 24" stroke="#cdcdcd" stroke-width="3" stroke-linecap="round"/></svg>
<div class="r" style="left:4.00px;top:622.50px;width:77.00px;height:1.00px;background:#5e5e5e;"></div>
<div class="r" style="left:27.50px;top:655.50px;width:44.00px;height:45.00px;background:#000;border:1.5px solid #e8e8e8;"></div>
<div class="r" style="left:37.50px;top:666.50px;width:23.00px;height:22.50px;background:#535353;border:1.5px solid #e8e8e8;"></div>
<div class="r" style="left:0.00px;top:629.00px;width:49.00px;height:48.00px;background:#ffffff;border:1px solid #c8c8c8;"></div>
<svg class="r" style="left:58.00px;top:627.00px;" width="22" height="22" viewBox="0 0 22 22"><path d="M5.5 5.5 C11 4.5 15 8 15.5 13.5" stroke="#cdcdcd" fill="none" stroke-width="2.2"/><path d="M2.5 5.8 L8.5 1.5 L8.5 10Z" fill="#cdcdcd"/><path d="M11.5 12.5 L19.8 12.5 L15.6 18.5Z" fill="#cdcdcd"/></svg>
<div class="r" style="left:5.50px;top:689.50px;width:9.50px;height:9.50px;background:#000;border:1.5px solid #e8e8e8;"></div>
<div class="r" style="left:0.50px;top:684.50px;width:9.50px;height:9.50px;background:#fff;border:1.5px solid #111;"></div>
<div class="r" style="left:1.50px;top:711.00px;width:25.00px;height:27.00px;background:#3c3c3c;border-radius:2px;"></div>
<div class="r" style="left:3.80px;top:716.00px;width:19.00px;height:17.50px;background:#fff;border:1.5px solid #1a1a1a;"></div>
<div class="r" style="left:30.50px;top:716.00px;width:19.00px;height:17.50px;border:1.5px solid #1a1a1a;background:linear-gradient(90deg,#fff,#222);"></div>
<div class="r" style="left:58.00px;top:716.00px;width:19.00px;height:17.50px;background:#fff;border:1.5px solid #1a1a1a;"></div>
<svg class="r" style="left:58.00px;top:716.00px;" width="19" height="17.5" viewBox="0 0 19 17.5"><path d="M2 15.5 L17 2" stroke="#e01b1b" stroke-width="3"/></svg>
<div class="r" style="left:1.50px;top:745.00px;width:78.00px;height:24.50px;border:1px solid #5f5f5f;border-radius:2px;"></div>
<div class="r" style="left:1.50px;top:745.00px;width:25.00px;height:24.50px;background:#3c3c3c;border-radius:2px;"></div>
<svg class="r" style="left:4.00px;top:747.00px;" width="20" height="20" viewBox="0 0 20 20"><circle cx="8.5" cy="9" r="5.6" fill="#8a8a8a" stroke="#cdcdcd" stroke-width="1.5"/><rect x="9.5" y="10" width="7.5" height="7.5" fill="#cdcdcd"/></svg>
<svg class="r" style="left:31.00px;top:747.00px;" width="20" height="20" viewBox="0 0 20 20"><circle cx="8.5" cy="9" r="5.6" fill="#8a8a8a" stroke="#cdcdcd" stroke-width="1.5"/><rect x="9.5" y="10" width="7.5" height="7.5" fill="#9a9a9a"/></svg>
<svg class="r" style="left:58.00px;top:747.00px;" width="20" height="20" viewBox="0 0 20 20"><circle cx="9" cy="9.5" r="5.2" fill="#606060" stroke="#727272" stroke-width="1.5"/></svg>
<svg class="r" style="left:24.00px;top:781.00px;" width="34" height="32" viewBox="0 0 34 32"><rect x="2.5" y="9.5" width="18" height="14.5" fill="#7a7a7a" stroke="#cdcdcd" stroke-width="1.5"/><rect x="12.5" y="3" width="18" height="14.5" fill="#7a7a7a" stroke="#cdcdcd" stroke-width="1.5"/><path d="M12.5 5 h18 M2.5 11.5 h10" stroke="#cdcdcd" stroke-width="2.5"/></svg>
<svg class="r" style="left:28.00px;top:828.00px;" width="26" height="12" viewBox="0 0 26 12"><circle cx="5.5" cy="6.5" r="2.5" fill="#cdcdcd"/><circle cx="13" cy="6.5" r="2.5" fill="#cdcdcd"/><circle cx="20.5" cy="6.5" r="2.5" fill="#cdcdcd"/></svg>
<div class="r" style="left:1584.00px;top:125.00px;width:21.50px;height:1095.00px;background:#4d4d4d;"></div>
<div class="r" style="left:1605.20px;top:86.00px;width:3.20px;height:1134.00px;background:#3a3a3a;"></div>
<svg class="r" style="left:1584.00px;top:130.00px;" width="21" height="16" viewBox="0 0 21 16"><path d="M6.199999999999999,10.3 L10.7,5.7 L15.2,10.3" fill="none" stroke="#a8a8a8" stroke-width="1.4" stroke-linecap="round" stroke-linejoin="round"/></svg>
<svg class="r" style="left:1584.00px;top:1196.00px;" width="21" height="16" viewBox="0 0 21 16"><path d="M6.199999999999999,6.2 L10.7,10.8 L15.2,6.2" fill="none" stroke="#c8c8c8" stroke-width="1.4" stroke-linecap="round" stroke-linejoin="round"/></svg>
<div class="r" style="left:1586.00px;top:654.00px;width:17.00px;height:33.50px;background:#6b6b6b;border-radius:8.5px;"></div>
<div class="r" style="left:1608.30px;top:86.00px;width:337.70px;height:1134.00px;background:#3c3c3c;"></div>
<div class="r" style="left:1608.30px;top:86.00px;width:337.70px;height:16.00px;background:#424242;"></div>
<svg class="r" style="left:1930.00px;top:90.00px;" width="12" height="9" viewBox="0 0 12 9"><path d="M1.5 1.2 L4.5 4.3 L1.5 7.4 M6.5 1.2 L9.5 4.3 L6.5 7.4" fill="none" stroke="#cfcfcf" stroke-width="1.3"/></svg>
<div class="r" style="left:1608.30px;top:102.30px;width:337.70px;height:38.20px;background:#424242;"></div>
<div class="r" style="left:1608.30px;top:102.30px;width:134.20px;height:39.20px;background:#535353;"></div>
<span class="t" style="left:1622.00px;top:113.29px;font-size:13.6px;color:#f2f2f2;font-weight:700;letter-spacing:0.194px;">3D and Materials</span>
<div class="r" style="left:1608.30px;top:145.00px;width:337.70px;height:35.50px;background:#424242;"></div>
<div class="r" style="left:1608.30px;top:145.00px;width:102.20px;height:35.50px;background:#454545;border-right:1px solid #3a3a3a;"></div>
<span class="t" style="left:1622.50px;top:156.44px;font-size:13.6px;color:#b2b2b2;font-weight:700;letter-spacing:-0.182px;">Color Guide</span>
<div class="r" style="left:1710.50px;top:145.00px;width:69.50px;height:36.50px;background:#535353;"></div>
<svg class="r" style="left:1717.00px;top:156.25px;" width="8" height="13" viewBox="0 0 8 13"><path d="M1.5,4.6 L4,1.8000000000000003 L6.5,4.6" fill="none" stroke="#c8c8c8" stroke-width="1.2" stroke-linecap="round" stroke-linejoin="round"/><path d="M1.5,8.4 L4,11.200000000000001 L6.5,8.4" fill="none" stroke="#c8c8c8" stroke-width="1.2" stroke-linecap="round" stroke-linejoin="round"/></svg>
<span class="t" style="left:1732.50px;top:156.44px;font-size:13.6px;color:#f2f2f2;font-weight:700;letter-spacing:-0.127px;">Color</span>
<svg class="r" style="left:1926.00px;top:155.75px;" width="16" height="14" viewBox="0 0 16 14"><path d="M1 2.5 H14 M1 7 H14 M1 11.5 H14" stroke="#c4c4c4" stroke-width="1.4"/></svg>
<div class="r" style="left:1608.30px;top:181.00px;width:337.70px;height:311.50px;background:#535353;"></div>
<div class="r" style="left:1616.50px;top:194.50px;width:18.00px;height:18.00px;background:#fff;"></div>
<div class="r" style="left:1634.50px;top:194.50px;width:18.00px;height:18.00px;background:#050505;"></div>
<div class="r" style="left:1652.50px;top:194.50px;width:18.00px;height:18.00px;background:#fff;"></div>
<div class="r" style="left:1616.50px;top:194.50px;width:54.00px;height:18.00px;border:1px solid #2c2c2c;"></div>
<svg class="r" style="left:1616.50px;top:194.50px;" width="18" height="18" viewBox="0 0 18 18"><path d="M1 17 L17 1" stroke="#e01b1b" stroke-width="2.6"/></svg>
<span class="t" style="left:1829.00px;top:198.80px;font-size:13px;color:#d8d8d8;letter-spacing:0.770px;border-bottom:1px dotted #b8b8b8;padding-bottom:1px;">#</span>
<div class="r" style="left:1847.50px;top:191.00px;width:79.50px;height:26.00px;background:#444444;border-radius:2px;"></div>
<span class="t" style="left:1852.50px;top:196.99px;font-size:13.6px;color:#e8e8e8;transform:scaleX(1.1659);transform-origin:0 0;">ffffff</span>
<div class="r" style="left:1618.00px;top:227.80px;width:308.50px;height:258.00px;background:linear-gradient(180deg,rgba(255,255,255,1) 0%,rgba(255,255,255,.82) 9%,rgba(255,255,255,.42) 28%,rgba(255,255,255,.12) 44%,rgba(255,255,255,0) 54%),linear-gradient(180deg,rgba(0,0,0,0) 54%,rgba(0,0,0,.28) 68%,rgba(0,0,0,.7) 84%,rgba(0,0,0,.95) 96%,#000 100%),linear-gradient(90deg,#ed1c24 0%,#f26522 5%,#fbaf17 11%,#fff200 16%,#c4d82e 21%,#8dc63f 28%,#39b54a 37%,#00a651 42%,#00a99d 49%,#27b8e8 54.5%,#1c8fd6 58%,#1c5fae 63%,#2e3192 69%,#5a2d91 78%,#92278f 85%,#d4148a 90%,#ec008c 92.5%,#ed1c24 100%);border:1px solid #3a3a3a;"></div>
<div class="r" style="left:1608.30px;top:497.50px;width:337.70px;height:38.50px;background:#424242;"></div>
<div class="r" style="left:1608.30px;top:497.50px;width:94.70px;height:39.50px;background:#535353;"></div>
<svg class="r" style="left:1614.80px;top:510.25px;" width="8" height="13" viewBox="0 0 8 13"><path d="M1.5,4.6 L4,1.8000000000000003 L6.5,4.6" fill="none" stroke="#c8c8c8" stroke-width="1.2" stroke-linecap="round" stroke-linejoin="round"/><path d="M1.5,8.4 L4,11.200000000000001 L6.5,8.4" fill="none" stroke="#c8c8c8" stroke-width="1.2" stroke-linecap="round" stroke-linejoin="round"/></svg>
<span class="t" style="left:1630.00px;top:510.44px;font-size:13.6px;color:#f2f2f2;font-weight:700;letter-spacing:-0.062px;">Character</span>
<div class="r" style="left:1703.00px;top:497.50px;width:90.00px;height:38.50px;background:#454545;border-right:1px solid #3a3a3a;"></div>
<span class="t" style="left:1716.00px;top:510.44px;font-size:13.6px;color:#b2b2b2;font-weight:700;letter-spacing:-0.159px;">Paragraph</span>
<div class="r" style="left:1793.00px;top:497.50px;width:90.00px;height:38.50px;background:#454545;border-right:1px solid #3a3a3a;"></div>
<span class="t" style="left:1806.00px;top:510.44px;font-size:13.6px;color:#b2b2b2;font-weight:700;letter-spacing:-0.070px;">OpenType</span>
<svg class="r" style="left:1926.00px;top:509.75px;" width="16" height="14" viewBox="0 0 16 14"><path d="M1 2.5 H14 M1 7 H14 M1 11.5 H14" stroke="#c4c4c4" stroke-width="1.4"/></svg>
<div class="r" style="left:1608.30px;top:540.00px;width:337.70px;height:36.50px;background:#424242;"></div>
<div class="r" style="left:1608.30px;top:540.00px;width:121.20px;height:37.50px;background:#535353;"></div>
<span class="t" style="left:1622.50px;top:551.94px;font-size:13.6px;color:#f2f2f2;font-weight:700;letter-spacing:0.109px;">Document Info</span>
<div class="r" style="left:1729.50px;top:540.00px;width:90.00px;height:36.50px;background:#454545;border-right:1px solid #3a3a3a;"></div>
<span class="t" style="left:1742.00px;top:551.94px;font-size:13.6px;color:#b2b2b2;font-weight:700;letter-spacing:0.086px;">Attributes</span>
<svg class="r" style="left:1926.00px;top:551.25px;" width="16" height="14" viewBox="0 0 16 14"><path d="M1 2.5 H14 M1 7 H14 M1 11.5 H14" stroke="#c4c4c4" stroke-width="1.4"/></svg>
<div class="r" style="left:1608.30px;top:582.50px;width:337.70px;height:36.50px;background:#424242;"></div>
<div class="r" style="left:1608.30px;top:582.50px;width:60.70px;height:36.50px;background:#454545;border-right:1px solid #3a3a3a;"></div>
<span class="t" style="left:1622.50px;top:594.44px;font-size:13.6px;color:#b2b2b2;font-weight:700;letter-spacing:0.002px;">Align</span>
<div class="r" style="left:1669.00px;top:582.50px;width:94.00px;height:36.50px;background:#454545;border-right:1px solid #3a3a3a;"></div>
<span class="t" style="left:1682.50px;top:594.44px;font-size:13.6px;color:#b2b2b2;font-weight:700;letter-spacing:0.083px;">Pathfinder</span>
<div class="r" style="left:1763.00px;top:582.50px;width:98.50px;height:37.50px;background:#535353;"></div>
<svg class="r" style="left:1769.50px;top:594.25px;" width="8" height="13" viewBox="0 0 8 13"><path d="M1.5,4.6 L4,1.8000000000000003 L6.5,4.6" fill="none" stroke="#c8c8c8" stroke-width="1.2" stroke-linecap="round" stroke-linejoin="round"/><path d="M1.5,8.4 L4,11.200000000000001 L6.5,8.4" fill="none" stroke="#c8c8c8" stroke-width="1.2" stroke-linecap="round" stroke-linejoin="round"/></svg>
<span class="t" style="left:1784.50px;top:594.44px;font-size:13.6px;color:#f2f2f2;font-weight:700;letter-spacing:-0.001px;">Transform</span>
<svg class="r" style="left:1926.00px;top:593.75px;" width="16" height="14" viewBox="0 0 16 14"><path d="M1 2.5 H14 M1 7 H14 M1 11.5 H14" stroke="#c4c4c4" stroke-width="1.4"/></svg>
<div class="r" style="left:1608.30px;top:619.50px;width:337.70px;height:407.50px;background:#535353;"></div>
<span class="t" style="left:1662.00px;top:637.50px;font-size:13px;color:#6d6d6d;">X:</span>
<div class="r" style="left:1679.00px;top:629.50px;width:79.50px;height:27.50px;background:#5a5a5a;border-radius:2px;"></div>
<span class="t" style="left:1684.00px;top:636.85px;font-size:13px;color:#767676;">0 mm</span>
<span class="t" style="left:1766.50px;top:637.50px;font-size:13px;color:#6d6d6d;">W:</span>
<div class="r" style="left:1788.00px;top:629.50px;width:79.50px;height:27.50px;background:#5a5a5a;border-radius:2px;"></div>
<span class="t" style="left:1793.00px;top:636.85px;font-size:13px;color:#767676;">0 mm</span>
<span class="t" style="left:1663.00px;top:672.50px;font-size:13px;color:#6d6d6d;">Y:</span>
<div class="r" style="left:1679.00px;top:664.00px;width:79.50px;height:28.00px;background:#5a5a5a;border-radius:2px;"></div>
<span class="t" style="left:1684.00px;top:671.60px;font-size:13px;color:#767676;">0 mm</span>
<span class="t" style="left:1769.50px;top:672.50px;font-size:13px;color:#6d6d6d;">H:</span>
<div class="r" style="left:1788.00px;top:664.00px;width:79.50px;height:28.00px;background:#5a5a5a;border-radius:2px;"></div>
<span class="t" style="left:1793.00px;top:671.60px;font-size:13px;color:#767676;">0 mm</span>
<div class="r" style="left:1679.00px;top:700.00px;width:76.50px;height:27.00px;background:#5a5a5a;border-radius:2px;"></div>
<span class="t" style="left:1684.00px;top:707.10px;font-size:13px;color:#767676;">0°</span>
<svg class="r" style="left:1735.50px;top:708.50px;" width="14" height="10" viewBox="0 0 14 10"><path d="M3.0,2.9 L7,7.1 L11.0,2.9" fill="none" stroke="#8c8c8c" stroke-width="1.3" stroke-linecap="round" stroke-linejoin="round"/></svg>
<div class="r" style="left:1789.00px;top:700.00px;width:76.50px;height:27.00px;background:#5a5a5a;border-radius:2px;"></div>
<span class="t" style="left:1794.00px;top:707.10px;font-size:13px;color:#767676;">0°</span>
<svg class="r" style="left:1845.50px;top:708.50px;" width="14" height="10" viewBox="0 0 14 10"><path d="M3.0,2.9 L7,7.1 L11.0,2.9" fill="none" stroke="#8c8c8c" stroke-width="1.3" stroke-linecap="round" stroke-linejoin="round"/></svg>
<svg class="r" style="left:1653.00px;top:704.00px;" width="24" height="18" viewBox="0 0 24 18"><path d="M2 14.5 H15.5 M2 14.5 L12 4 M9.8 14.5 A 5 5 0 0 0 8 9" fill="none" stroke="#8a8a8a" stroke-width="1.4"/><circle cx="20" cy="8.5" r="1" fill="#777"/><circle cx="20" cy="14" r="1" fill="#777"/></svg>
<svg class="r" style="left:1764.00px;top:704.00px;" width="24" height="18" viewBox="0 0 24 18"><path d="M2 15 L6.5 4 H14 L9.5 15 Z" fill="#8a8a8a"/><circle cx="19.5" cy="8.5" r="1" fill="#777"/><circle cx="19.5" cy="14" r="1" fill="#777"/></svg>
<svg class="r" style="left:1615.30px;top:646.60px;" width="27.5" height="27.5" viewBox="0 0 29 29"><path d="M4 4 H25 M4 14.5 H25 M4 25 H25 M4 4 V25 M14.5 4 V25 M25 4 V25" stroke="#d0d0d0" stroke-width="1"/><rect x="1.5" y="1.5" width="5" height="5" fill="#535353" stroke="#d0d0d0" stroke-width="1.1"/><rect x="1.5" y="12.0" width="5" height="5" fill="#535353" stroke="#d0d0d0" stroke-width="1.1"/><rect x="1.5" y="22.5" width="5" height="5" fill="#535353" stroke="#d0d0d0" stroke-width="1.1"/><rect x="12.0" y="1.5" width="5" height="5" fill="#535353" stroke="#d0d0d0" stroke-width="1.1"/><rect x="12.0" y="12.0" width="5" height="5" fill="#535353" stroke="#d0d0d0" stroke-width="1.1"/><rect x="12.0" y="22.5" width="5" height="5" fill="#535353" stroke="#d0d0d0" stroke-width="1.1"/><rect x="22.5" y="1.5" width="5" height="5" fill="#535353" stroke="#d0d0d0" stroke-width="1.1"/><rect x="22.5" y="12.0" width="5" height="5" fill="#535353" stroke="#d0d0d0" stroke-width="1.1"/><rect x="22.5" y="22.5" width="5" height="5" fill="#535353" stroke="#d0d0d0" stroke-width="1.1"/><rect x="22.5" y="22.5" width="5" height="5" fill="#f0f0f0"/></svg>
<div class="r" style="left:1873.50px;top:643.00px;width:33.00px;height:33.00px;background:#2c2c2c;border-radius:3px;"></div>
<svg class="r" style="left:1873.50px;top:643.00px;" width="33" height="33" viewBox="0 0 33 33"><path d="M12 17.2 V12.8 a4.3 4.3 0 0 1 8.6 0 V15.7 a4.3 4.3 0 0 1 -4.3 4.3" fill="none" stroke="#f6f6f6" stroke-width="2.1" stroke-linecap="round"/><path d="M20.6 17.8 V22.2 a4.3 4.3 0 0 1 -8.6 0 V18.8 a4.3 4.3 0 0 1 4.3 -4.3" fill="none" stroke="#f6f6f6" stroke-width="2.1" stroke-linecap="round"/></svg>
<div class="r" style="left:1616.00px;top:735.50px;width:330.00px;height:1.00px;background:#4a4a4a;"></div>
<span class="t" style="left:1718.00px;top:844.00px;font-size:13px;color:#767676;letter-spacing:0.101px;">No Shape Properties</span>
<div class="r" style="left:1616.00px;top:963.50px;width:330.00px;height:1.00px;background:#4a4a4a;"></div>
<div class="r" style="left:1617.50px;top:974.00px;width:16.50px;height:16.50px;background:#d2d2d2;border-radius:2.5px;"></div>
<svg class="r" style="left:1617.50px;top:974.00px;" width="16.5" height="16.5" viewBox="0 0 16.5 16.5"><path d="M3.8 8.6 L7 11.8 L12.8 4.6" fill="none" stroke="#2e2e2e" stroke-width="1.9" stroke-linecap="round" stroke-linejoin="round"/></svg>
<div class="r" style="left:1617.50px;top:1001.50px;width:16.50px;height:16.50px;background:#d2d2d2;border-radius:2.5px;"></div>
<svg class="r" style="left:1617.50px;top:1001.50px;" width="16.5" height="16.5" viewBox="0 0 16.5 16.5"><path d="M3.8 8.6 L7 11.8 L12.8 4.6" fill="none" stroke="#2e2e2e" stroke-width="1.9" stroke-linecap="round" stroke-linejoin="round"/></svg>
<span class="t" style="left:1640.50px;top:975.82px;font-size:13.8px;color:#ececec;letter-spacing:-0.453px;">Scale Corners</span>
<span class="t" style="left:1640.50px;top:1003.02px;font-size:13.8px;color:#ececec;letter-spacing:-0.270px;">Scale Strokes &amp; Effects</span>
<div class="r" style="left:1608.30px;top:1031.00px;width:337.70px;height:36.00px;background:#424242;"></div>
<div class="r" style="left:1608.30px;top:1031.00px;width:85.20px;height:37.00px;background:#535353;"></div>
<span class="t" style="left:1622.50px;top:1042.69px;font-size:13.6px;color:#f2f2f2;font-weight:700;letter-spacing:-0.463px;">Swatches</span>
<div class="r" style="left:1693.50px;top:1031.00px;width:73.50px;height:36.00px;background:#454545;border-right:1px solid #3a3a3a;"></div>
<span class="t" style="left:1707.00px;top:1042.69px;font-size:13.6px;color:#b2b2b2;font-weight:700;transform:scaleX(0.9188);transform-origin:0 0;">Brushes</span>
<div class="r" style="left:1767.00px;top:1031.00px;width:81.00px;height:36.00px;background:#454545;border-right:1px solid #3a3a3a;"></div>
<span class="t" style="left:1781.50px;top:1042.69px;font-size:13.6px;color:#b2b2b2;font-weight:700;letter-spacing:-0.531px;">Symbols</span>
<svg class="r" style="left:1926.00px;top:1042.00px;" width="16" height="14" viewBox="0 0 16 14"><path d="M1 2.5 H14 M1 7 H14 M1 11.5 H14" stroke="#c4c4c4" stroke-width="1.4"/></svg>
<div class="r" style="left:1608.30px;top:1073.00px;width:337.70px;height:37.00px;background:#424242;"></div>
<div class="r" style="left:1608.30px;top:1073.00px;width:69.70px;height:37.00px;background:#454545;border-right:1px solid #3a3a3a;"></div>
<span class="t" style="left:1622.50px;top:1085.19px;font-size:13.6px;color:#b2b2b2;font-weight:700;letter-spacing:-0.266px;">Stroke</span>
<div class="r" style="left:1678.00px;top:1073.00px;width:88.00px;height:38.00px;background:#535353;"></div>
<svg class="r" style="left:1684.50px;top:1085.00px;" width="8" height="13" viewBox="0 0 8 13"><path d="M1.5,4.6 L4,1.8000000000000003 L6.5,4.6" fill="none" stroke="#c8c8c8" stroke-width="1.2" stroke-linecap="round" stroke-linejoin="round"/><path d="M1.5,8.4 L4,11.200000000000001 L6.5,8.4" fill="none" stroke="#c8c8c8" stroke-width="1.2" stroke-linecap="round" stroke-linejoin="round"/></svg>
<span class="t" style="left:1700.00px;top:1085.19px;font-size:13.6px;color:#f2f2f2;font-weight:700;letter-spacing:-0.132px;">Gradient</span>
<div class="r" style="left:1766.00px;top:1073.00px;width:109.00px;height:37.00px;background:#454545;border-right:1px solid #3a3a3a;"></div>
<span class="t" style="left:1779.00px;top:1085.19px;font-size:13.6px;color:#b2b2b2;font-weight:700;letter-spacing:-0.268px;">Transparency</span>
<svg class="r" style="left:1926.00px;top:1084.50px;" width="16" height="14" viewBox="0 0 16 14"><path d="M1 2.5 H14 M1 7 H14 M1 11.5 H14" stroke="#c4c4c4" stroke-width="1.4"/></svg>
<div class="r" style="left:1608.30px;top:1115.50px;width:337.70px;height:37.00px;background:#424242;"></div>
<div class="r" style="left:1608.30px;top:1115.50px;width:100.20px;height:38.00px;background:#535353;"></div>
<span class="t" style="left:1622.50px;top:1127.69px;font-size:13.6px;color:#f2f2f2;font-weight:700;letter-spacing:-0.262px;">Appearance</span>
<div class="r" style="left:1708.50px;top:1115.50px;width:116.50px;height:37.00px;background:#454545;border-right:1px solid #3a3a3a;"></div>
<span class="t" style="left:1721.50px;top:1127.69px;font-size:13.6px;color:#b2b2b2;font-weight:700;letter-spacing:-0.288px;">Graphic Styles</span>
<svg class="r" style="left:1926.00px;top:1127.00px;" width="16" height="14" viewBox="0 0 16 14"><path d="M1 2.5 H14 M1 7 H14 M1 11.5 H14" stroke="#c4c4c4" stroke-width="1.4"/></svg>
<div class="r" style="left:1608.30px;top:1157.50px;width:337.70px;height:36.00px;background:#424242;"></div>
<div class="r" style="left:1608.30px;top:1157.50px;width:65.70px;height:37.00px;background:#535353;"></div>
<span class="t" style="left:1622.50px;top:1169.19px;font-size:13.6px;color:#f2f2f2;font-weight:700;transform:scaleX(0.9121);transform-origin:0 0;">Layers</span>
<div class="r" style="left:1674.00px;top:1157.50px;width:103.50px;height:36.00px;background:#454545;border-right:1px solid #3a3a3a;"></div>
<span class="t" style="left:1686.50px;top:1169.19px;font-size:13.6px;color:#b2b2b2;font-weight:700;letter-spacing:-0.308px;">Asset Export</span>
<div class="r" style="left:1777.50px;top:1157.50px;width:88.50px;height:36.00px;background:#454545;border-right:1px solid #3a3a3a;"></div>
<span class="t" style="left:1791.00px;top:1169.19px;font-size:13.6px;color:#b2b2b2;font-weight:700;letter-spacing:-0.123px;">Artboards</span>
<svg class="r" style="left:1926.00px;top:1168.50px;" width="16" height="14" viewBox="0 0 16 14"><path d="M1 2.5 H14 M1 7 H14 M1 11.5 H14" stroke="#c4c4c4" stroke-width="1.4"/></svg>
<div class="r" style="left:1608.30px;top:1200.50px;width:337.70px;height:20.00px;background:#424242;"></div>
<div class="r" style="left:1608.30px;top:1200.50px;width:90.70px;height:20.00px;background:#454545;border-right:1px solid #3a3a3a;"></div>
<span class="t" style="left:1622.50px;top:1210.49px;font-size:13.6px;color:#b2b2b2;font-weight:700;letter-spacing:-0.141px;">Properties</span>
<div class="r" style="left:1699.00px;top:1200.50px;width:80.50px;height:21.00px;background:#535353;"></div>
<span class="t" style="left:1713.50px;top:1210.49px;font-size:13.6px;color:#f2f2f2;font-weight:700;letter-spacing:-0.306px;">Libraries</span>
<div class="r" style="left:93.00px;top:213.00px;width:1490.50px;height:915.00px;background:#ffffff;border:1px solid #0a0a0a;"></div>
<div class="r" style="left:92.50px;top:1216.50px;width:1491.50px;height:4.00px;background:#4d4d4d;"></div>
<div class="r" style="left:971.50px;top:135.00px;width:610.80px;height:47.30px;background:#535353;border:1px solid #3b3b3b;border-radius:6px;"></div>
<svg class="r" style="left:981.00px;top:145.00px;" width="6" height="27" viewBox="0 0 6 27"><path d="M2.6 1 V26" stroke="#3e3e3e" stroke-width="4.2" stroke-dasharray="1 1.2"/></svg>
<div class="r" style="left:999.00px;top:140.30px;width:153.50px;height:37.00px;border:1px solid #6c6c6c;border-radius:2px;"></div>
<svg class="r" style="left:1011.00px;top:148.00px;" width="26" height="22" viewBox="0 0 26 22"><circle cx="15.5" cy="12.2" r="6.8" fill="none" stroke="#d8d8d8" stroke-width="1.6"/><path d="M1.1 13.5 L8.3 1.3 L15.5 13.5 Z" fill="#d4d4d4" stroke="#535353" stroke-width="0.9"/></svg>
<span class="t" style="left:1042.50px;top:152.76px;font-size:16px;color:#efefef;letter-spacing:-0.122px;">Add a Shape</span>
<svg class="r" style="left:1142.00px;top:167.00px;" width="8" height="8" viewBox="0 0 8 8"><path d="M7 1 V7 H1 Z" fill="#d4d4d4"/></svg>
<div class="r" style="left:1158.50px;top:140.30px;width:240.50px;height:37.00px;border:1px solid #6c6c6c;border-radius:2px;"></div>
<svg class="r" style="left:1167.00px;top:143.00px;" width="30" height="30" viewBox="0 0 30 30"><path d="M6.5 15 V24.5 q0 2 2 2 H19 q2 0 2-2 V18" fill="none" stroke="#d8d8d8" stroke-width="2.2"/>
    <path d="M22 4.5 l1.5 4 l4 1.5 l-4 1.5 l-1.5 4 l-1.5-4 l-4-1.5 l4-1.5z" fill="#d8d8d8"/>
    <path d="M13.6 15.2 l1 2.6 l2.6 1 l-2.6 1 l-1 2.6 l-1-2.6 l-2.6-1 l2.6-1z" fill="#d8d8d8"/>
    <circle cx="7" cy="7.2" r="4.6" fill="#2680eb"/></svg>
<span class="t" style="left:1201.50px;top:152.76px;font-size:16px;color:#efefef;letter-spacing:0.180px;">Generate Vectors (Beta)</span>
<svg class="r" style="left:1412.00px;top:147.00px;" width="24" height="24" viewBox="0 0 24 24"><path d="M3.5 6.5 V3.2 H20.5 V6.5 M12 3.2 V20.2 M8.5 20.4 H15.5" fill="none" stroke="#dcdcdc" stroke-width="2.6"/></svg>
<svg class="r" style="left:1455.00px;top:145.00px;" width="28" height="28" viewBox="0 0 28 28"><path d="M9.5 1.2 V8 M2 8.4 H8.5" stroke="#dcdcdc" stroke-width="1.3"/><path d="M9.7 8.3 H20.5 L24.8 12.6 V22.3 H9.7 Z" fill="#8c8c8c" stroke="#dcdcdc" stroke-width="1.4"/></svg>
<svg class="r" style="left:1500.00px;top:146.00px;" width="28" height="26" viewBox="0 0 28 26"><path d="M4.3 20.2 V5 H21.8 V12" fill="none" stroke="#dcdcdc" stroke-width="1.6"/><path d="M3.5 4.2 H22.6 V7 H3.5Z" fill="#dcdcdc"/><path d="M3.5 20.8 V13.5 L6.5 13.5 L8.5 9.5 L11 14 V20.8Z" fill="#dcdcdc"/><circle cx="17.7" cy="17.8" r="6.3" fill="#dcdcdc" stroke="#535353" stroke-width="1.2"/><path d="M17.7 14.2 V21.4 M14.1 17.8 H21.3" stroke="#535353" stroke-width="1.8"/></svg>
<svg class="r" style="left:1541.00px;top:153.00px;" width="26" height="12" viewBox="0 0 26 12"><circle cx="5" cy="6" r="2.7" fill="#dcdcdc"/><circle cx="13" cy="6" r="2.7" fill="#dcdcdc"/><circle cx="21" cy="6" r="2.7" fill="#dcdcdc"/></svg>
<span class="t" style="left:142.94px;top:285.15px;font-size:6.20px;color:#2a2a2a;transform:scaleX(1.0495);transform-origin:0 0;">5mm acrylic 069 dense white panels</span>
<span class="t" style="left:142.92px;top:294.75px;font-size:6.20px;color:#2a2a2a;transform:scaleX(1.0521);transform-origin:0 0;">computer cut vinyl details applied to the face</span>
<span class="t" style="left:142.95px;top:303.45px;font-size:6.20px;color:#2a2a2a;transform:scaleX(0.9986);transform-origin:0 0;">gloss black</span>
<span class="t" style="left:144.00px;top:334.69px;font-size:8.28px;color:#2a2a2a;transform:scaleX(1.0692);transform-origin:0 0;">Item A - Stairwell</span>
<div class="r" style="left:142.70px;top:355.00px;width:135.30px;height:57.80px;background:#ffffff;border:1px solid #c6c6c6;"></div>
<div class="r" style="left:142.70px;top:431.00px;width:135.30px;height:57.80px;background:#ffffff;border:1px solid #c6c6c6;"></div>
<div class="r" style="left:142.70px;top:506.30px;width:135.30px;height:57.80px;background:#ffffff;border:1px solid #c6c6c6;"></div>
<div class="r" style="left:142.70px;top:582.80px;width:135.30px;height:57.80px;background:#ffffff;border:1px solid #c6c6c6;"></div>
<div class="r" style="left:142.70px;top:659.30px;width:135.30px;height:57.80px;background:#ffffff;border:1px solid #c6c6c6;"></div>
<div class="r" style="left:142.70px;top:737.70px;width:135.30px;height:57.80px;background:#ffffff;border:1px solid #c6c6c6;"></div>
<span class="t" style="left:148.02px;top:362.17px;font-size:20.35px;color:#1a1a1a;transform:scaleX(0.8452);transform-origin:0 0;-webkit-text-stroke:0.5px #1a1a1a;">FLOOR</span>
<span class="t" style="left:211.46px;top:359.71px;font-size:23.26px;color:#1a1a1a;transform:scaleX(0.6562);transform-origin:0 0;-webkit-text-stroke:0.5px #1a1a1a;">1</span>
<span class="t" style="left:227.62px;top:362.67px;font-size:19.77px;color:#1a1a1a;transform:scaleX(1.0007);transform-origin:0 0;-webkit-text-stroke:0.5px #1a1a1a;">Flats</span>
<span class="t" style="left:148.11px;top:385.09px;font-size:23.40px;color:#1a1a1a;transform:scaleX(1.0215);transform-origin:0 0;-webkit-text-stroke:0.5px #1a1a1a;">1.1</span>
<span class="t" style="left:184.95px;top:390.26px;font-size:17.30px;color:#1a1a1a;transform:scaleX(1.0674);transform-origin:0 0;-webkit-text-stroke:0.5px #1a1a1a;">&amp;</span>
<span class="t" style="left:201.59px;top:385.09px;font-size:23.40px;color:#1a1a1a;transform:scaleX(1.0317);transform-origin:0 0;-webkit-text-stroke:0.5px #1a1a1a;">1.2</span>
<span class="t" style="left:147.81px;top:435.10px;font-size:23.98px;color:#1a1a1a;transform:scaleX(0.8264);transform-origin:0 0;-webkit-text-stroke:0.5px #1a1a1a;">FLOOR</span>
<span class="t" style="left:224.01px;top:435.10px;font-size:23.98px;color:#1a1a1a;transform:scaleX(0.9673);transform-origin:0 0;-webkit-text-stroke:0.5px #1a1a1a;">-2</span>
<span class="t" style="left:147.83px;top:461.88px;font-size:22.24px;color:#1a1a1a;transform:scaleX(1.0534);transform-origin:0 0;-webkit-text-stroke:0.5px #1a1a1a;">Plant Room</span>
<span class="t" style="left:147.54px;top:513.89px;font-size:19.62px;color:#1a1a1a;transform:scaleX(0.8658);transform-origin:0 0;-webkit-text-stroke:0.5px #1a1a1a;">FLOOR</span>
<span class="t" style="left:208.90px;top:510.81px;font-size:23.26px;color:#1a1a1a;transform:scaleX(0.9686);transform-origin:0 0;-webkit-text-stroke:0.5px #1a1a1a;">5</span>
<span class="t" style="left:227.62px;top:514.14px;font-size:19.33px;color:#1a1a1a;transform:scaleX(1.0232);transform-origin:0 0;-webkit-text-stroke:0.5px #1a1a1a;">Flats</span>
<span class="t" style="left:148.51px;top:536.51px;font-size:23.26px;color:#1a1a1a;transform:scaleX(0.9521);transform-origin:0 0;-webkit-text-stroke:0.5px #1a1a1a;">5.1,</span>
<span class="t" style="left:186.95px;top:536.51px;font-size:23.26px;color:#1a1a1a;transform:scaleX(1.0201);transform-origin:0 0;-webkit-text-stroke:0.5px #1a1a1a;">5.2</span>
<span class="t" style="left:222.25px;top:541.44px;font-size:17.44px;color:#1a1a1a;transform:scaleX(1.0677);transform-origin:0 0;-webkit-text-stroke:0.5px #1a1a1a;">&amp;</span>
<span class="t" style="left:238.99px;top:536.51px;font-size:23.26px;color:#1a1a1a;transform:scaleX(0.9833);transform-origin:0 0;-webkit-text-stroke:0.5px #1a1a1a;">5.3</span>
<span class="t" style="left:148.04px;top:590.39px;font-size:19.62px;color:#1a1a1a;transform:scaleX(0.8658);transform-origin:0 0;-webkit-text-stroke:0.5px #1a1a1a;">FLOOR</span>
<span class="t" style="left:209.14px;top:587.31px;font-size:23.26px;color:#1a1a1a;transform:scaleX(0.9948);transform-origin:0 0;-webkit-text-stroke:0.5px #1a1a1a;">6</span>
<span class="t" style="left:228.14px;top:590.64px;font-size:19.33px;color:#1a1a1a;transform:scaleX(1.0106);transform-origin:0 0;-webkit-text-stroke:0.5px #1a1a1a;">Flats</span>
<span class="t" style="left:148.27px;top:613.01px;font-size:23.26px;color:#1a1a1a;transform:scaleX(0.9724);transform-origin:0 0;-webkit-text-stroke:0.5px #1a1a1a;">6.1,</span>
<span class="t" style="left:186.69px;top:613.01px;font-size:23.26px;color:#1a1a1a;transform:scaleX(1.0446);transform-origin:0 0;-webkit-text-stroke:0.5px #1a1a1a;">6.2</span>
<span class="t" style="left:222.75px;top:617.94px;font-size:17.44px;color:#1a1a1a;transform:scaleX(1.0677);transform-origin:0 0;-webkit-text-stroke:0.5px #1a1a1a;">&amp;</span>
<span class="t" style="left:237.70px;top:613.01px;font-size:23.26px;color:#1a1a1a;transform:scaleX(1.0323);transform-origin:0 0;-webkit-text-stroke:0.5px #1a1a1a;">6.3</span>
<span class="t" style="left:147.83px;top:663.81px;font-size:23.26px;color:#1a1a1a;transform:scaleX(0.8458);transform-origin:0 0;-webkit-text-stroke:0.5px #1a1a1a;">FLOOR</span>
<span class="t" style="left:218.11px;top:663.57px;font-size:23.55px;color:#1a1a1a;transform:scaleX(1.1234);transform-origin:0 0;-webkit-text-stroke:0.5px #1a1a1a;">9</span>
<span class="t" style="left:147.50px;top:689.27px;font-size:23.55px;color:#1a1a1a;transform:scaleX(1.0076);transform-origin:0 0;-webkit-text-stroke:0.5px #1a1a1a;">Penthouse</span>
<span class="t" style="left:147.83px;top:742.41px;font-size:23.26px;color:#1a1a1a;transform:scaleX(0.8458);transform-origin:0 0;-webkit-text-stroke:0.5px #1a1a1a;">FLOOR</span>
<span class="t" style="left:219.12px;top:742.17px;font-size:23.55px;color:#1a1a1a;transform:scaleX(1.0644);transform-origin:0 0;-webkit-text-stroke:0.5px #1a1a1a;">10</span>
<span class="t" style="left:147.50px;top:767.91px;font-size:23.26px;color:#1a1a1a;transform:scaleX(1.0202);transform-origin:0 0;-webkit-text-stroke:0.5px #1a1a1a;">Penthouse</span>
<div class="r" style="left:199.75px;top:348.00px;width:20.00px;height:6.00px;background:#ffffff;"></div>
<span class="t" style="left:200.31px;top:348.10px;font-size:5.61px;color:#1c1c1c;transform:scaleX(1.0107);transform-origin:0 0;-webkit-text-stroke:0.22px #1c1c1c;font-family:'Liberation Serif',serif;">600 mm</span>
<span class="t" style="left:279.47px;top:381.40px;font-size:5.61px;color:#1c1c1c;transform:scaleX(0.9667);transform-origin:0 0;-webkit-text-stroke:0.22px #1c1c1c;font-family:'Liberation Serif',serif;">255 mm</span>
<div class="r" style="left:199.75px;top:423.30px;width:20.00px;height:6.00px;background:#ffffff;"></div>
<span class="t" style="left:200.31px;top:423.40px;font-size:5.61px;color:#1c1c1c;transform:scaleX(1.0107);transform-origin:0 0;-webkit-text-stroke:0.22px #1c1c1c;font-family:'Liberation Serif',serif;">600 mm</span>
<span class="t" style="left:279.47px;top:457.40px;font-size:5.61px;color:#1c1c1c;transform:scaleX(0.9667);transform-origin:0 0;-webkit-text-stroke:0.22px #1c1c1c;font-family:'Liberation Serif',serif;">255 mm</span>
<div class="r" style="left:199.75px;top:498.00px;width:20.00px;height:6.00px;background:#ffffff;"></div>
<span class="t" style="left:200.31px;top:498.10px;font-size:5.61px;color:#1c1c1c;transform:scaleX(1.0107);transform-origin:0 0;-webkit-text-stroke:0.22px #1c1c1c;font-family:'Liberation Serif',serif;">600 mm</span>
<span class="t" style="left:279.47px;top:532.70px;font-size:5.61px;color:#1c1c1c;transform:scaleX(0.9667);transform-origin:0 0;-webkit-text-stroke:0.22px #1c1c1c;font-family:'Liberation Serif',serif;">255 mm</span>
<div class="r" style="left:199.75px;top:575.40px;width:20.00px;height:6.00px;background:#ffffff;"></div>
<span class="t" style="left:200.31px;top:575.50px;font-size:5.61px;color:#1c1c1c;transform:scaleX(1.0107);transform-origin:0 0;-webkit-text-stroke:0.22px #1c1c1c;font-family:'Liberation Serif',serif;">600 mm</span>
<span class="t" style="left:279.47px;top:609.20px;font-size:5.61px;color:#1c1c1c;transform:scaleX(0.9667);transform-origin:0 0;-webkit-text-stroke:0.22px #1c1c1c;font-family:'Liberation Serif',serif;">255 mm</span>
<div class="r" style="left:199.75px;top:652.20px;width:20.00px;height:6.00px;background:#ffffff;"></div>
<span class="t" style="left:200.31px;top:652.30px;font-size:5.61px;color:#1c1c1c;transform:scaleX(1.0107);transform-origin:0 0;-webkit-text-stroke:0.22px #1c1c1c;font-family:'Liberation Serif',serif;">600 mm</span>
<span class="t" style="left:279.47px;top:685.70px;font-size:5.61px;color:#1c1c1c;transform:scaleX(0.9667);transform-origin:0 0;-webkit-text-stroke:0.22px #1c1c1c;font-family:'Liberation Serif',serif;">255 mm</span>
<div class="r" style="left:199.75px;top:729.90px;width:20.00px;height:6.00px;background:#ffffff;"></div>
<span class="t" style="left:200.31px;top:730.00px;font-size:5.61px;color:#1c1c1c;transform:scaleX(1.0107);transform-origin:0 0;-webkit-text-stroke:0.22px #1c1c1c;font-family:'Liberation Serif',serif;">600 mm</span>
<span class="t" style="left:279.47px;top:764.10px;font-size:5.61px;color:#1c1c1c;transform:scaleX(0.9667);transform-origin:0 0;-webkit-text-stroke:0.22px #1c1c1c;font-family:'Liberation Serif',serif;">255 mm</span>
<span class="t" style="left:341.74px;top:285.15px;font-size:6.20px;color:#2a2a2a;transform:scaleX(1.0505);transform-origin:0 0;">5mm acrylic 069 dense white panels</span>
<span class="t" style="left:341.72px;top:294.75px;font-size:6.20px;color:#2a2a2a;transform:scaleX(1.0537);transform-origin:0 0;">computer cut vinyl details applied to the face</span>
<span class="t" style="left:341.75px;top:303.45px;font-size:6.20px;color:#2a2a2a;transform:scaleX(1.0019);transform-origin:0 0;">gloss black</span>
<span class="t" style="left:344.82px;top:334.69px;font-size:8.28px;color:#2a2a2a;transform:scaleX(1.0501);transform-origin:0 0;">Item B - Stairwell</span>
<div class="r" style="left:342.00px;top:355.80px;width:146.10px;height:78.20px;background:#ffffff;border:1px solid #c6c6c6;"></div>
<span class="t" style="left:347.83px;top:360.88px;font-size:22.82px;color:#1a1a1a;transform:scaleX(0.8619);transform-origin:0 0;-webkit-text-stroke:0.5px #1a1a1a;">FLOOR</span>
<span class="t" style="left:418.39px;top:360.88px;font-size:22.82px;color:#1a1a1a;transform:scaleX(1.0632);transform-origin:0 0;-webkit-text-stroke:0.5px #1a1a1a;">2</span>
<span class="t" style="left:347.59px;top:383.81px;font-size:22.67px;color:#1a1a1a;transform:scaleX(1.0003);transform-origin:0 0;-webkit-text-stroke:0.5px #1a1a1a;">Flats 2.1, 2.2</span>
<span class="t" style="left:348.25px;top:406.58px;font-size:22.82px;color:#1a1a1a;transform:scaleX(1.0098);transform-origin:0 0;-webkit-text-stroke:0.5px #1a1a1a;">2.3</span>
<span class="t" style="left:383.68px;top:411.14px;font-size:17.44px;color:#1a1a1a;transform:scaleX(1.0213);transform-origin:0 0;-webkit-text-stroke:0.5px #1a1a1a;">&amp;</span>
<span class="t" style="left:400.29px;top:406.58px;font-size:22.82px;color:#1a1a1a;transform:scaleX(1.0617);transform-origin:0 0;-webkit-text-stroke:0.5px #1a1a1a;">2.4</span>
<div class="r" style="left:404.45px;top:349.20px;width:20.00px;height:6.00px;background:#ffffff;"></div>
<span class="t" style="left:405.01px;top:349.30px;font-size:5.61px;color:#1c1c1c;transform:scaleX(1.0107);transform-origin:0 0;-webkit-text-stroke:0.22px #1c1c1c;font-family:'Liberation Serif',serif;">650 mm</span>
<span class="t" style="left:490.54px;top:392.40px;font-size:5.61px;color:#1c1c1c;transform:scaleX(0.9682);transform-origin:0 0;-webkit-text-stroke:0.22px #1c1c1c;font-family:'Liberation Serif',serif;">345 mm</span>
<div class="r" style="left:342.00px;top:447.60px;width:146.10px;height:78.20px;background:#ffffff;border:1px solid #c6c6c6;"></div>
<span class="t" style="left:347.83px;top:452.68px;font-size:22.82px;color:#1a1a1a;transform:scaleX(0.8619);transform-origin:0 0;-webkit-text-stroke:0.5px #1a1a1a;">FLOOR</span>
<span class="t" style="left:418.72px;top:452.68px;font-size:22.82px;color:#1a1a1a;transform:scaleX(1.0240);transform-origin:0 0;-webkit-text-stroke:0.5px #1a1a1a;">3</span>
<span class="t" style="left:347.59px;top:475.61px;font-size:22.67px;color:#1a1a1a;transform:scaleX(1.0003);transform-origin:0 0;-webkit-text-stroke:0.5px #1a1a1a;">Flats 3.1, 3.2</span>
<span class="t" style="left:348.54px;top:498.38px;font-size:22.82px;color:#1a1a1a;transform:scaleX(1.0002);transform-origin:0 0;-webkit-text-stroke:0.5px #1a1a1a;">3.3</span>
<span class="t" style="left:387.28px;top:502.94px;font-size:17.44px;color:#1a1a1a;transform:scaleX(1.0213);transform-origin:0 0;-webkit-text-stroke:0.5px #1a1a1a;">&amp;</span>
<span class="t" style="left:405.31px;top:498.38px;font-size:22.82px;color:#1a1a1a;transform:scaleX(1.0418);transform-origin:0 0;-webkit-text-stroke:0.5px #1a1a1a;">3.4</span>
<div class="r" style="left:404.45px;top:440.60px;width:20.00px;height:6.00px;background:#ffffff;"></div>
<span class="t" style="left:405.01px;top:440.70px;font-size:5.61px;color:#1c1c1c;transform:scaleX(1.0107);transform-origin:0 0;-webkit-text-stroke:0.22px #1c1c1c;font-family:'Liberation Serif',serif;">650 mm</span>
<span class="t" style="left:490.54px;top:484.20px;font-size:5.61px;color:#1c1c1c;transform:scaleX(0.9682);transform-origin:0 0;-webkit-text-stroke:0.22px #1c1c1c;font-family:'Liberation Serif',serif;">345 mm</span>
<div class="r" style="left:342.00px;top:540.40px;width:146.10px;height:78.20px;background:#ffffff;border:1px solid #c6c6c6;"></div>
<span class="t" style="left:347.83px;top:545.48px;font-size:22.82px;color:#1a1a1a;transform:scaleX(0.8619);transform-origin:0 0;-webkit-text-stroke:0.5px #1a1a1a;">FLOOR</span>
<span class="t" style="left:419.11px;top:545.48px;font-size:22.82px;color:#1a1a1a;transform:scaleX(0.9632);transform-origin:0 0;-webkit-text-stroke:0.5px #1a1a1a;">4</span>
<span class="t" style="left:347.59px;top:568.41px;font-size:22.67px;color:#1a1a1a;transform:scaleX(1.0003);transform-origin:0 0;-webkit-text-stroke:0.5px #1a1a1a;">Flats 4.1, 4.2</span>
<span class="t" style="left:348.89px;top:591.18px;font-size:22.82px;color:#1a1a1a;transform:scaleX(0.9889);transform-origin:0 0;-webkit-text-stroke:0.5px #1a1a1a;">4.3</span>
<span class="t" style="left:387.28px;top:595.74px;font-size:17.44px;color:#1a1a1a;transform:scaleX(1.0213);transform-origin:0 0;-webkit-text-stroke:0.5px #1a1a1a;">&amp;</span>
<span class="t" style="left:405.67px;top:591.18px;font-size:22.82px;color:#1a1a1a;transform:scaleX(1.0301);transform-origin:0 0;-webkit-text-stroke:0.5px #1a1a1a;">4.4</span>
<div class="r" style="left:404.45px;top:534.20px;width:20.00px;height:6.00px;background:#ffffff;"></div>
<span class="t" style="left:405.01px;top:534.30px;font-size:5.61px;color:#1c1c1c;transform:scaleX(1.0107);transform-origin:0 0;-webkit-text-stroke:0.22px #1c1c1c;font-family:'Liberation Serif',serif;">650 mm</span>
<span class="t" style="left:490.54px;top:577.00px;font-size:5.61px;color:#1c1c1c;transform:scaleX(0.9682);transform-origin:0 0;-webkit-text-stroke:0.22px #1c1c1c;font-family:'Liberation Serif',serif;">345 mm</span>
<div class="r" style="left:342.00px;top:633.00px;width:146.10px;height:78.20px;background:#ffffff;border:1px solid #c6c6c6;"></div>
<span class="t" style="left:347.83px;top:638.08px;font-size:22.82px;color:#1a1a1a;transform:scaleX(0.8619);transform-origin:0 0;-webkit-text-stroke:0.5px #1a1a1a;">FLOOR</span>
<span class="t" style="left:418.39px;top:638.08px;font-size:22.82px;color:#1a1a1a;transform:scaleX(1.0632);transform-origin:0 0;-webkit-text-stroke:0.5px #1a1a1a;">7</span>
<span class="t" style="left:347.59px;top:661.01px;font-size:22.67px;color:#1a1a1a;transform:scaleX(1.0003);transform-origin:0 0;-webkit-text-stroke:0.5px #1a1a1a;">Flats 7.1, 7.2</span>
<span class="t" style="left:348.25px;top:683.78px;font-size:22.82px;color:#1a1a1a;transform:scaleX(1.0098);transform-origin:0 0;-webkit-text-stroke:0.5px #1a1a1a;">7.3</span>
<span class="t" style="left:387.28px;top:688.34px;font-size:17.44px;color:#1a1a1a;transform:scaleX(1.0213);transform-origin:0 0;-webkit-text-stroke:0.5px #1a1a1a;">&amp;</span>
<span class="t" style="left:405.00px;top:683.78px;font-size:22.82px;color:#1a1a1a;transform:scaleX(1.0517);transform-origin:0 0;-webkit-text-stroke:0.5px #1a1a1a;">7.4</span>
<div class="r" style="left:404.45px;top:627.20px;width:20.00px;height:6.00px;background:#ffffff;"></div>
<span class="t" style="left:405.01px;top:627.30px;font-size:5.61px;color:#1c1c1c;transform:scaleX(1.0107);transform-origin:0 0;-webkit-text-stroke:0.22px #1c1c1c;font-family:'Liberation Serif',serif;">650 mm</span>
<span class="t" style="left:490.54px;top:669.60px;font-size:5.61px;color:#1c1c1c;transform:scaleX(0.9682);transform-origin:0 0;-webkit-text-stroke:0.22px #1c1c1c;font-family:'Liberation Serif',serif;">345 mm</span>
<div class="r" style="left:342.00px;top:725.00px;width:146.10px;height:78.20px;background:#ffffff;border:1px solid #c6c6c6;"></div>
<span class="t" style="left:347.83px;top:730.08px;font-size:22.82px;color:#1a1a1a;transform:scaleX(0.8619);transform-origin:0 0;-webkit-text-stroke:0.5px #1a1a1a;">FLOOR</span>
<span class="t" style="left:418.60px;top:730.08px;font-size:22.82px;color:#1a1a1a;transform:scaleX(1.0295);transform-origin:0 0;-webkit-text-stroke:0.5px #1a1a1a;">8</span>
<span class="t" style="left:347.59px;top:753.01px;font-size:22.67px;color:#1a1a1a;transform:scaleX(1.0003);transform-origin:0 0;-webkit-text-stroke:0.5px #1a1a1a;">Flats 8.1, 8.2</span>
<span class="t" style="left:348.43px;top:775.78px;font-size:22.82px;color:#1a1a1a;transform:scaleX(1.0040);transform-origin:0 0;-webkit-text-stroke:0.5px #1a1a1a;">8.3</span>
<span class="t" style="left:387.28px;top:780.34px;font-size:17.44px;color:#1a1a1a;transform:scaleX(1.0213);transform-origin:0 0;-webkit-text-stroke:0.5px #1a1a1a;">&amp;</span>
<span class="t" style="left:405.19px;top:775.78px;font-size:22.82px;color:#1a1a1a;transform:scaleX(1.0457);transform-origin:0 0;-webkit-text-stroke:0.5px #1a1a1a;">8.4</span>
<div class="r" style="left:404.45px;top:719.20px;width:20.00px;height:6.00px;background:#ffffff;"></div>
<span class="t" style="left:405.01px;top:719.30px;font-size:5.61px;color:#1c1c1c;transform:scaleX(1.0107);transform-origin:0 0;-webkit-text-stroke:0.22px #1c1c1c;font-family:'Liberation Serif',serif;">650 mm</span>
<span class="t" style="left:490.54px;top:761.60px;font-size:5.61px;color:#1c1c1c;transform:scaleX(0.9682);transform-origin:0 0;-webkit-text-stroke:0.22px #1c1c1c;font-family:'Liberation Serif',serif;">345 mm</span>
<span class="t" style="left:554.54px;top:285.15px;font-size:6.20px;color:#2a2a2a;transform:scaleX(1.0444);transform-origin:0 0;">5mm acrylic 069 dense white panels</span>
<span class="t" style="left:554.52px;top:294.75px;font-size:6.20px;color:#2a2a2a;transform:scaleX(1.0496);transform-origin:0 0;">computer cut vinyl details applied to the face</span>
<span class="t" style="left:554.56px;top:303.45px;font-size:6.20px;color:#2a2a2a;transform:scaleX(0.9822);transform-origin:0 0;">gloss black</span>
<span class="t" style="left:554.02px;top:334.69px;font-size:8.28px;color:#2a2a2a;transform:scaleX(1.0415);transform-origin:0 0;">Item C - Basement</span>
<div class="r" style="left:552.30px;top:355.00px;width:134.90px;height:77.80px;background:#ffffff;border:1px solid #c6c6c6;"></div>
<span class="t" style="left:557.83px;top:360.09px;font-size:23.40px;color:#1a1a1a;transform:scaleX(0.8405);transform-origin:0 0;-webkit-text-stroke:0.5px #1a1a1a;">FLOOR</span>
<span class="t" style="left:631.91px;top:360.09px;font-size:23.40px;color:#1a1a1a;transform:scaleX(1.0985);transform-origin:0 0;-webkit-text-stroke:0.5px #1a1a1a;">-1</span>
<span class="t" style="left:580.18px;top:384.53px;font-size:20.64px;color:#1a1a1a;transform:scaleX(0.8963);transform-origin:0 0;-webkit-text-stroke:0.5px #1a1a1a;">Car Park</span>
<span class="t" style="left:577.51px;top:407.13px;font-size:20.64px;color:#1a1a1a;transform:scaleX(0.9604);transform-origin:0 0;-webkit-text-stroke:0.5px #1a1a1a;">Plant Room</span>
<div class="r" style="left:609.15px;top:348.40px;width:20.00px;height:6.00px;background:#ffffff;"></div>
<span class="t" style="left:609.71px;top:348.50px;font-size:5.61px;color:#1c1c1c;transform:scaleX(1.0107);transform-origin:0 0;-webkit-text-stroke:0.22px #1c1c1c;font-family:'Liberation Serif',serif;">600 mm</span>
<span class="t" style="left:689.14px;top:391.40px;font-size:5.61px;color:#1c1c1c;transform:scaleX(0.9682);transform-origin:0 0;-webkit-text-stroke:0.22px #1c1c1c;font-family:'Liberation Serif',serif;">345 mm</span>
<span class="t" style="left:769.75px;top:282.28px;font-size:6.40px;color:#2a2a2a;transform:scaleX(1.0517);transform-origin:0 0;">3mm brushed silver ACM panels</span>
<span class="t" style="left:769.73px;top:290.48px;font-size:6.40px;color:#2a2a2a;transform:scaleX(1.0713);transform-origin:0 0;">gloss black computer cut vinyl text applied to the face</span>
<span class="t" style="left:769.80px;top:306.38px;font-size:6.40px;color:#2a2a2a;transform:scaleX(1.0649);transform-origin:0 0;">Z channel fixed to rear using double sided tape</span>
<span class="t" style="left:769.81px;top:334.69px;font-size:8.28px;color:#2a2a2a;transform:scaleX(1.0582);transform-origin:0 0;">Item D - Lobby</span>
<div class="r" style="left:768.60px;top:356.30px;width:111.40px;height:56.40px;background:#bbbbbd;"></div>
<div class="r" style="left:768.60px;top:429.60px;width:111.40px;height:56.40px;background:#bbbbbd;"></div>
<div class="r" style="left:768.60px;top:508.70px;width:111.40px;height:56.40px;background:#bbbbbd;"></div>
<span class="t" style="left:773.43px;top:360.94px;font-size:23.11px;color:#1a1a1a;transform:scaleX(0.8485);transform-origin:0 0;-webkit-text-stroke:0.5px #1a1a1a;">FLOOR</span>
<span class="t" style="left:846.57px;top:360.94px;font-size:23.11px;color:#1a1a1a;transform:scaleX(0.9404);transform-origin:0 0;-webkit-text-stroke:0.5px #1a1a1a;">1</span>
<span class="t" style="left:773.10px;top:386.01px;font-size:23.26px;color:#1a1a1a;transform:scaleX(1.0215);transform-origin:0 0;-webkit-text-stroke:0.5px #1a1a1a;">Flat 1.1</span>
<span class="t" style="left:788.73px;top:433.91px;font-size:23.26px;color:#1a1a1a;transform:scaleX(0.8432);transform-origin:0 0;-webkit-text-stroke:0.5px #1a1a1a;">FLOOR</span>
<span class="t" style="left:861.87px;top:433.91px;font-size:23.26px;color:#1a1a1a;transform:scaleX(0.9346);transform-origin:0 0;-webkit-text-stroke:0.5px #1a1a1a;">1</span>
<span class="t" style="left:796.63px;top:458.87px;font-size:23.55px;color:#1a1a1a;transform:scaleX(0.9917);transform-origin:0 0;-webkit-text-stroke:0.5px #1a1a1a;">Flat 1.2</span>
<span class="t" style="left:773.43px;top:512.44px;font-size:23.69px;color:#1a1a1a;transform:scaleX(0.8276);transform-origin:0 0;-webkit-text-stroke:0.5px #1a1a1a;">FLOOR</span>
<span class="t" style="left:845.14px;top:512.44px;font-size:23.69px;color:#1a1a1a;transform:scaleX(1.0452);transform-origin:0 0;-webkit-text-stroke:0.5px #1a1a1a;">10</span>
<span class="t" style="left:773.30px;top:540.04px;font-size:21.22px;color:#1a1a1a;transform:scaleX(0.9986);transform-origin:0 0;-webkit-text-stroke:0.5px #1a1a1a;">Penthouse</span>
<div class="r" style="left:813.70px;top:349.70px;width:20.00px;height:6.00px;background:#ffffff;"></div>
<span class="t" style="left:814.17px;top:349.80px;font-size:5.61px;color:#1c1c1c;transform:scaleX(1.0154);transform-origin:0 0;-webkit-text-stroke:0.22px #1c1c1c;font-family:'Liberation Serif',serif;">500 mm</span>
<span class="t" style="left:884.57px;top:382.00px;font-size:5.61px;color:#1c1c1c;transform:scaleX(0.9667);transform-origin:0 0;-webkit-text-stroke:0.22px #1c1c1c;font-family:'Liberation Serif',serif;">255 mm</span>
<div class="r" style="left:813.70px;top:423.10px;width:20.00px;height:6.00px;background:#ffffff;"></div>
<span class="t" style="left:814.17px;top:423.20px;font-size:5.61px;color:#1c1c1c;transform:scaleX(1.0154);transform-origin:0 0;-webkit-text-stroke:0.22px #1c1c1c;font-family:'Liberation Serif',serif;">500 mm</span>
<span class="t" style="left:883.77px;top:455.30px;font-size:5.61px;color:#1c1c1c;transform:scaleX(0.9667);transform-origin:0 0;-webkit-text-stroke:0.22px #1c1c1c;font-family:'Liberation Serif',serif;">255 mm</span>
<div class="r" style="left:813.70px;top:501.60px;width:20.00px;height:6.00px;background:#ffffff;"></div>
<span class="t" style="left:814.17px;top:501.70px;font-size:5.61px;color:#1c1c1c;transform:scaleX(1.0154);transform-origin:0 0;-webkit-text-stroke:0.22px #1c1c1c;font-family:'Liberation Serif',serif;">500 mm</span>
<span class="t" style="left:882.07px;top:534.40px;font-size:5.61px;color:#1c1c1c;transform:scaleX(0.9667);transform-origin:0 0;-webkit-text-stroke:0.22px #1c1c1c;font-family:'Liberation Serif',serif;">255 mm</span>
<span class="t" style="left:1002.55px;top:282.28px;font-size:6.40px;color:#2a2a2a;transform:scaleX(1.0495);transform-origin:0 0;">3mm brushed silver ACM panels</span>
<span class="t" style="left:1002.53px;top:290.48px;font-size:6.40px;color:#2a2a2a;transform:scaleX(1.0687);transform-origin:0 0;">gloss black computer cut vinyl text applied to the face</span>
<span class="t" style="left:1002.60px;top:306.38px;font-size:6.40px;color:#2a2a2a;transform:scaleX(1.0634);transform-origin:0 0;">Z channel fixed to rear using double sided tape</span>
<span class="t" style="left:1003.22px;top:334.69px;font-size:8.28px;color:#2a2a2a;transform:scaleX(1.0522);transform-origin:0 0;">Item E - Lobby</span>
<div class="r" style="left:1001.00px;top:355.20px;width:111.00px;height:76.40px;background:#bbbbbd;"></div>
<div class="r" style="left:1154.00px;top:355.20px;width:111.50px;height:76.40px;background:#bbbbbd;"></div>
<span class="t" style="left:1010.62px;top:359.71px;font-size:22.67px;color:#1a1a1a;transform:scaleX(0.8701);transform-origin:0 0;-webkit-text-stroke:0.5px #1a1a1a;">FLOOR</span>
<span class="t" style="left:1085.03px;top:359.71px;font-size:22.67px;color:#1a1a1a;transform:scaleX(1.0315);transform-origin:0 0;-webkit-text-stroke:0.5px #1a1a1a;">2</span>
<span class="t" style="left:1010.32px;top:382.41px;font-size:22.67px;color:#1a1a1a;transform:scaleX(1.0357);transform-origin:0 0;-webkit-text-stroke:0.5px #1a1a1a;">Flats</span>
<span class="t" style="left:1011.03px;top:405.04px;font-size:23.11px;color:#1a1a1a;transform:scaleX(1.0144);transform-origin:0 0;-webkit-text-stroke:0.5px #1a1a1a;">2.1</span>
<span class="t" style="left:1050.37px;top:408.61px;font-size:18.90px;color:#1a1a1a;transform:scaleX(0.9599);transform-origin:0 0;-webkit-text-stroke:0.5px #1a1a1a;">&amp;</span>
<span class="t" style="left:1067.79px;top:405.04px;font-size:23.11px;color:#1a1a1a;transform:scaleX(1.0445);transform-origin:0 0;-webkit-text-stroke:0.5px #1a1a1a;">2.2</span>
<span class="t" style="left:1167.72px;top:359.71px;font-size:22.67px;color:#1a1a1a;transform:scaleX(0.8701);transform-origin:0 0;-webkit-text-stroke:0.5px #1a1a1a;">FLOOR</span>
<span class="t" style="left:1242.10px;top:359.71px;font-size:22.67px;color:#1a1a1a;transform:scaleX(1.0604);transform-origin:0 0;-webkit-text-stroke:0.5px #1a1a1a;">2</span>
<span class="t" style="left:1204.93px;top:382.41px;font-size:22.67px;color:#1a1a1a;transform:scaleX(1.0314);transform-origin:0 0;-webkit-text-stroke:0.5px #1a1a1a;">Flats</span>
<span class="t" style="left:1164.82px;top:405.04px;font-size:23.11px;color:#1a1a1a;transform:scaleX(1.0171);transform-origin:0 0;-webkit-text-stroke:0.5px #1a1a1a;">2.3</span>
<span class="t" style="left:1204.87px;top:408.61px;font-size:18.90px;color:#1a1a1a;transform:scaleX(0.9599);transform-origin:0 0;-webkit-text-stroke:0.5px #1a1a1a;">&amp;</span>
<span class="t" style="left:1221.79px;top:405.04px;font-size:23.11px;color:#1a1a1a;transform:scaleX(1.0484);transform-origin:0 0;-webkit-text-stroke:0.5px #1a1a1a;">2.4</span>
<div class="r" style="left:1045.90px;top:348.10px;width:20.00px;height:6.00px;background:#ffffff;"></div>
<span class="t" style="left:1046.37px;top:348.20px;font-size:5.61px;color:#1c1c1c;transform:scaleX(1.0154);transform-origin:0 0;-webkit-text-stroke:0.22px #1c1c1c;font-family:'Liberation Serif',serif;">500 mm</span>
<span class="t" style="left:1117.44px;top:390.90px;font-size:5.61px;color:#1c1c1c;transform:scaleX(0.9682);transform-origin:0 0;-webkit-text-stroke:0.22px #1c1c1c;font-family:'Liberation Serif',serif;">345 mm</span>
<div class="r" style="left:1199.15px;top:348.10px;width:20.00px;height:6.00px;background:#ffffff;"></div>
<span class="t" style="left:1199.62px;top:348.20px;font-size:5.61px;color:#1c1c1c;transform:scaleX(1.0154);transform-origin:0 0;-webkit-text-stroke:0.22px #1c1c1c;font-family:'Liberation Serif',serif;">500 mm</span>
<span class="t" style="left:1267.44px;top:390.90px;font-size:5.61px;color:#1c1c1c;transform:scaleX(0.9682);transform-origin:0 0;-webkit-text-stroke:0.22px #1c1c1c;font-family:'Liberation Serif',serif;">345 mm</span>
<div class="r" style="left:1001.00px;top:449.40px;width:111.00px;height:76.40px;background:#bbbbbd;"></div>
<div class="r" style="left:1154.00px;top:449.40px;width:111.50px;height:76.40px;background:#bbbbbd;"></div>
<span class="t" style="left:1010.62px;top:453.91px;font-size:22.67px;color:#1a1a1a;transform:scaleX(0.8701);transform-origin:0 0;-webkit-text-stroke:0.5px #1a1a1a;">FLOOR</span>
<span class="t" style="left:1085.36px;top:453.91px;font-size:22.67px;color:#1a1a1a;transform:scaleX(0.9935);transform-origin:0 0;-webkit-text-stroke:0.5px #1a1a1a;">3</span>
<span class="t" style="left:1010.32px;top:476.61px;font-size:22.67px;color:#1a1a1a;transform:scaleX(1.0357);transform-origin:0 0;-webkit-text-stroke:0.5px #1a1a1a;">Flats</span>
<span class="t" style="left:1011.33px;top:499.24px;font-size:23.11px;color:#1a1a1a;transform:scaleX(1.0047);transform-origin:0 0;-webkit-text-stroke:0.5px #1a1a1a;">3.1</span>
<span class="t" style="left:1050.37px;top:502.81px;font-size:18.90px;color:#1a1a1a;transform:scaleX(0.9599);transform-origin:0 0;-webkit-text-stroke:0.5px #1a1a1a;">&amp;</span>
<span class="t" style="left:1068.10px;top:499.24px;font-size:23.11px;color:#1a1a1a;transform:scaleX(1.0345);transform-origin:0 0;-webkit-text-stroke:0.5px #1a1a1a;">3.2</span>
<span class="t" style="left:1167.72px;top:453.91px;font-size:22.67px;color:#1a1a1a;transform:scaleX(0.8701);transform-origin:0 0;-webkit-text-stroke:0.5px #1a1a1a;">FLOOR</span>
<span class="t" style="left:1242.43px;top:453.91px;font-size:22.67px;color:#1a1a1a;transform:scaleX(1.0213);transform-origin:0 0;-webkit-text-stroke:0.5px #1a1a1a;">3</span>
<span class="t" style="left:1204.93px;top:476.61px;font-size:22.67px;color:#1a1a1a;transform:scaleX(1.0314);transform-origin:0 0;-webkit-text-stroke:0.5px #1a1a1a;">Flats</span>
<span class="t" style="left:1165.13px;top:499.24px;font-size:23.11px;color:#1a1a1a;transform:scaleX(1.0074);transform-origin:0 0;-webkit-text-stroke:0.5px #1a1a1a;">3.3</span>
<span class="t" style="left:1204.87px;top:502.81px;font-size:18.90px;color:#1a1a1a;transform:scaleX(0.9599);transform-origin:0 0;-webkit-text-stroke:0.5px #1a1a1a;">&amp;</span>
<span class="t" style="left:1222.10px;top:499.24px;font-size:23.11px;color:#1a1a1a;transform:scaleX(1.0385);transform-origin:0 0;-webkit-text-stroke:0.5px #1a1a1a;">3.4</span>
<div class="r" style="left:1045.90px;top:442.30px;width:20.00px;height:6.00px;background:#ffffff;"></div>
<span class="t" style="left:1046.37px;top:442.40px;font-size:5.61px;color:#1c1c1c;transform:scaleX(1.0154);transform-origin:0 0;-webkit-text-stroke:0.22px #1c1c1c;font-family:'Liberation Serif',serif;">500 mm</span>
<span class="t" style="left:1117.44px;top:485.10px;font-size:5.61px;color:#1c1c1c;transform:scaleX(0.9682);transform-origin:0 0;-webkit-text-stroke:0.22px #1c1c1c;font-family:'Liberation Serif',serif;">345 mm</span>
<div class="r" style="left:1199.15px;top:442.30px;width:20.00px;height:6.00px;background:#ffffff;"></div>
<span class="t" style="left:1199.62px;top:442.40px;font-size:5.61px;color:#1c1c1c;transform:scaleX(1.0154);transform-origin:0 0;-webkit-text-stroke:0.22px #1c1c1c;font-family:'Liberation Serif',serif;">500 mm</span>
<span class="t" style="left:1267.44px;top:485.10px;font-size:5.61px;color:#1c1c1c;transform:scaleX(0.9682);transform-origin:0 0;-webkit-text-stroke:0.22px #1c1c1c;font-family:'Liberation Serif',serif;">345 mm</span>
<div class="r" style="left:1001.00px;top:543.50px;width:111.00px;height:76.40px;background:#bbbbbd;"></div>
<div class="r" style="left:1154.00px;top:543.50px;width:111.50px;height:76.40px;background:#bbbbbd;"></div>
<span class="t" style="left:1010.62px;top:548.01px;font-size:22.67px;color:#1a1a1a;transform:scaleX(0.8701);transform-origin:0 0;-webkit-text-stroke:0.5px #1a1a1a;">FLOOR</span>
<span class="t" style="left:1085.72px;top:548.01px;font-size:22.67px;color:#1a1a1a;transform:scaleX(0.9345);transform-origin:0 0;-webkit-text-stroke:0.5px #1a1a1a;">4</span>
<span class="t" style="left:1010.32px;top:570.71px;font-size:22.67px;color:#1a1a1a;transform:scaleX(1.0357);transform-origin:0 0;-webkit-text-stroke:0.5px #1a1a1a;">Flats</span>
<span class="t" style="left:1011.68px;top:593.34px;font-size:23.11px;color:#1a1a1a;transform:scaleX(0.9933);transform-origin:0 0;-webkit-text-stroke:0.5px #1a1a1a;">4.1</span>
<span class="t" style="left:1050.37px;top:596.91px;font-size:18.90px;color:#1a1a1a;transform:scaleX(0.9599);transform-origin:0 0;-webkit-text-stroke:0.5px #1a1a1a;">&amp;</span>
<span class="t" style="left:1068.47px;top:593.34px;font-size:23.11px;color:#1a1a1a;transform:scaleX(1.0228);transform-origin:0 0;-webkit-text-stroke:0.5px #1a1a1a;">4.2</span>
<span class="t" style="left:1167.72px;top:548.01px;font-size:22.67px;color:#1a1a1a;transform:scaleX(0.8701);transform-origin:0 0;-webkit-text-stroke:0.5px #1a1a1a;">FLOOR</span>
<span class="t" style="left:1242.81px;top:548.01px;font-size:22.67px;color:#1a1a1a;transform:scaleX(0.9606);transform-origin:0 0;-webkit-text-stroke:0.5px #1a1a1a;">4</span>
<span class="t" style="left:1204.93px;top:570.71px;font-size:22.67px;color:#1a1a1a;transform:scaleX(1.0314);transform-origin:0 0;-webkit-text-stroke:0.5px #1a1a1a;">Flats</span>
<span class="t" style="left:1165.48px;top:593.34px;font-size:23.11px;color:#1a1a1a;transform:scaleX(0.9960);transform-origin:0 0;-webkit-text-stroke:0.5px #1a1a1a;">4.3</span>
<span class="t" style="left:1204.87px;top:596.91px;font-size:18.90px;color:#1a1a1a;transform:scaleX(0.9599);transform-origin:0 0;-webkit-text-stroke:0.5px #1a1a1a;">&amp;</span>
<span class="t" style="left:1222.47px;top:593.34px;font-size:23.11px;color:#1a1a1a;transform:scaleX(1.0269);transform-origin:0 0;-webkit-text-stroke:0.5px #1a1a1a;">4.4</span>
<div class="r" style="left:1045.90px;top:536.40px;width:20.00px;height:6.00px;background:#ffffff;"></div>
<span class="t" style="left:1046.37px;top:536.50px;font-size:5.61px;color:#1c1c1c;transform:scaleX(1.0154);transform-origin:0 0;-webkit-text-stroke:0.22px #1c1c1c;font-family:'Liberation Serif',serif;">500 mm</span>
<span class="t" style="left:1117.44px;top:579.20px;font-size:5.61px;color:#1c1c1c;transform:scaleX(0.9682);transform-origin:0 0;-webkit-text-stroke:0.22px #1c1c1c;font-family:'Liberation Serif',serif;">345 mm</span>
<div class="r" style="left:1199.15px;top:536.40px;width:20.00px;height:6.00px;background:#ffffff;"></div>
<span class="t" style="left:1199.62px;top:536.50px;font-size:5.61px;color:#1c1c1c;transform:scaleX(1.0154);transform-origin:0 0;-webkit-text-stroke:0.22px #1c1c1c;font-family:'Liberation Serif',serif;">500 mm</span>
<span class="t" style="left:1267.44px;top:579.20px;font-size:5.61px;color:#1c1c1c;transform:scaleX(0.9682);transform-origin:0 0;-webkit-text-stroke:0.22px #1c1c1c;font-family:'Liberation Serif',serif;">345 mm</span>
<div class="r" style="left:1001.00px;top:634.70px;width:111.00px;height:76.40px;background:#bbbbbd;"></div>
<div class="r" style="left:1154.00px;top:634.70px;width:111.50px;height:76.40px;background:#bbbbbd;"></div>
<span class="t" style="left:1010.62px;top:639.21px;font-size:22.67px;color:#1a1a1a;transform:scaleX(0.8701);transform-origin:0 0;-webkit-text-stroke:0.5px #1a1a1a;">FLOOR</span>
<span class="t" style="left:1085.30px;top:639.21px;font-size:22.67px;color:#1a1a1a;transform:scaleX(0.9935);transform-origin:0 0;-webkit-text-stroke:0.5px #1a1a1a;">5</span>
<span class="t" style="left:1010.27px;top:661.91px;font-size:22.67px;color:#1a1a1a;transform:scaleX(1.0629);transform-origin:0 0;-webkit-text-stroke:0.5px #1a1a1a;">Flat 5.1</span>
<span class="t" style="left:1167.72px;top:639.21px;font-size:22.67px;color:#1a1a1a;transform:scaleX(0.8701);transform-origin:0 0;-webkit-text-stroke:0.5px #1a1a1a;">FLOOR</span>
<span class="t" style="left:1242.37px;top:639.21px;font-size:22.67px;color:#1a1a1a;transform:scaleX(1.0213);transform-origin:0 0;-webkit-text-stroke:0.5px #1a1a1a;">5</span>
<span class="t" style="left:1204.93px;top:661.91px;font-size:22.67px;color:#1a1a1a;transform:scaleX(1.0314);transform-origin:0 0;-webkit-text-stroke:0.5px #1a1a1a;">Flats</span>
<span class="t" style="left:1165.06px;top:684.54px;font-size:23.11px;color:#1a1a1a;transform:scaleX(1.0132);transform-origin:0 0;-webkit-text-stroke:0.5px #1a1a1a;">5.2</span>
<span class="t" style="left:1204.87px;top:688.11px;font-size:18.90px;color:#1a1a1a;transform:scaleX(0.9599);transform-origin:0 0;-webkit-text-stroke:0.5px #1a1a1a;">&amp;</span>
<span class="t" style="left:1222.03px;top:684.54px;font-size:23.11px;color:#1a1a1a;transform:scaleX(1.0524);transform-origin:0 0;-webkit-text-stroke:0.5px #1a1a1a;">5.3</span>
<div class="r" style="left:1045.90px;top:627.60px;width:20.00px;height:6.00px;background:#ffffff;"></div>
<span class="t" style="left:1046.37px;top:627.70px;font-size:5.61px;color:#1c1c1c;transform:scaleX(1.0154);transform-origin:0 0;-webkit-text-stroke:0.22px #1c1c1c;font-family:'Liberation Serif',serif;">500 mm</span>
<span class="t" style="left:1117.44px;top:670.40px;font-size:5.61px;color:#1c1c1c;transform:scaleX(0.9682);transform-origin:0 0;-webkit-text-stroke:0.22px #1c1c1c;font-family:'Liberation Serif',serif;">345 mm</span>
<div class="r" style="left:1199.15px;top:627.60px;width:20.00px;height:6.00px;background:#ffffff;"></div>
<span class="t" style="left:1199.62px;top:627.70px;font-size:5.61px;color:#1c1c1c;transform:scaleX(1.0154);transform-origin:0 0;-webkit-text-stroke:0.22px #1c1c1c;font-family:'Liberation Serif',serif;">500 mm</span>
<span class="t" style="left:1267.44px;top:670.40px;font-size:5.61px;color:#1c1c1c;transform:scaleX(0.9682);transform-origin:0 0;-webkit-text-stroke:0.22px #1c1c1c;font-family:'Liberation Serif',serif;">345 mm</span>
<div class="r" style="left:1001.00px;top:734.20px;width:111.00px;height:76.40px;background:#bbbbbd;"></div>
<div class="r" style="left:1154.00px;top:734.20px;width:111.50px;height:76.40px;background:#bbbbbd;"></div>
<span class="t" style="left:1010.62px;top:738.71px;font-size:22.67px;color:#1a1a1a;transform:scaleX(0.8701);transform-origin:0 0;-webkit-text-stroke:0.5px #1a1a1a;">FLOOR</span>
<span class="t" style="left:1085.04px;top:738.71px;font-size:22.67px;color:#1a1a1a;transform:scaleX(1.0203);transform-origin:0 0;-webkit-text-stroke:0.5px #1a1a1a;">6</span>
<span class="t" style="left:1010.27px;top:761.41px;font-size:22.67px;color:#1a1a1a;transform:scaleX(1.0629);transform-origin:0 0;-webkit-text-stroke:0.5px #1a1a1a;">Flat 6.1</span>
<span class="t" style="left:1167.72px;top:738.71px;font-size:22.67px;color:#1a1a1a;transform:scaleX(0.8701);transform-origin:0 0;-webkit-text-stroke:0.5px #1a1a1a;">FLOOR</span>
<span class="t" style="left:1242.11px;top:738.71px;font-size:22.67px;color:#1a1a1a;transform:scaleX(1.0489);transform-origin:0 0;-webkit-text-stroke:0.5px #1a1a1a;">6</span>
<span class="t" style="left:1204.93px;top:761.41px;font-size:22.67px;color:#1a1a1a;transform:scaleX(1.0314);transform-origin:0 0;-webkit-text-stroke:0.5px #1a1a1a;">Flats</span>
<span class="t" style="left:1164.82px;top:784.04px;font-size:23.11px;color:#1a1a1a;transform:scaleX(1.0211);transform-origin:0 0;-webkit-text-stroke:0.5px #1a1a1a;">6.2</span>
<span class="t" style="left:1204.87px;top:787.61px;font-size:18.90px;color:#1a1a1a;transform:scaleX(0.9599);transform-origin:0 0;-webkit-text-stroke:0.5px #1a1a1a;">&amp;</span>
<span class="t" style="left:1221.77px;top:784.04px;font-size:23.11px;color:#1a1a1a;transform:scaleX(1.0605);transform-origin:0 0;-webkit-text-stroke:0.5px #1a1a1a;">6.3</span>
<div class="r" style="left:1045.90px;top:727.10px;width:20.00px;height:6.00px;background:#ffffff;"></div>
<span class="t" style="left:1046.37px;top:727.20px;font-size:5.61px;color:#1c1c1c;transform:scaleX(1.0154);transform-origin:0 0;-webkit-text-stroke:0.22px #1c1c1c;font-family:'Liberation Serif',serif;">500 mm</span>
<span class="t" style="left:1117.44px;top:769.90px;font-size:5.61px;color:#1c1c1c;transform:scaleX(0.9682);transform-origin:0 0;-webkit-text-stroke:0.22px #1c1c1c;font-family:'Liberation Serif',serif;">345 mm</span>
<div class="r" style="left:1199.15px;top:727.10px;width:20.00px;height:6.00px;background:#ffffff;"></div>
<span class="t" style="left:1199.62px;top:727.20px;font-size:5.61px;color:#1c1c1c;transform:scaleX(1.0154);transform-origin:0 0;-webkit-text-stroke:0.22px #1c1c1c;font-family:'Liberation Serif',serif;">500 mm</span>
<span class="t" style="left:1267.44px;top:769.90px;font-size:5.61px;color:#1c1c1c;transform:scaleX(0.9682);transform-origin:0 0;-webkit-text-stroke:0.22px #1c1c1c;font-family:'Liberation Serif',serif;">345 mm</span>
<div class="r" style="left:1001.00px;top:832.40px;width:111.00px;height:76.40px;background:#bbbbbd;"></div>
<div class="r" style="left:1154.00px;top:832.40px;width:111.50px;height:76.40px;background:#bbbbbd;"></div>
<span class="t" style="left:1010.62px;top:836.91px;font-size:22.67px;color:#1a1a1a;transform:scaleX(0.8701);transform-origin:0 0;-webkit-text-stroke:0.5px #1a1a1a;">FLOOR</span>
<span class="t" style="left:1085.03px;top:836.91px;font-size:22.67px;color:#1a1a1a;transform:scaleX(1.0315);transform-origin:0 0;-webkit-text-stroke:0.5px #1a1a1a;">7</span>
<span class="t" style="left:1010.32px;top:859.61px;font-size:22.67px;color:#1a1a1a;transform:scaleX(1.0357);transform-origin:0 0;-webkit-text-stroke:0.5px #1a1a1a;">Flats</span>
<span class="t" style="left:1011.03px;top:882.24px;font-size:23.11px;color:#1a1a1a;transform:scaleX(1.0144);transform-origin:0 0;-webkit-text-stroke:0.5px #1a1a1a;">7.1</span>
<span class="t" style="left:1050.37px;top:885.81px;font-size:18.90px;color:#1a1a1a;transform:scaleX(0.9599);transform-origin:0 0;-webkit-text-stroke:0.5px #1a1a1a;">&amp;</span>
<span class="t" style="left:1067.79px;top:882.24px;font-size:23.11px;color:#1a1a1a;transform:scaleX(1.0445);transform-origin:0 0;-webkit-text-stroke:0.5px #1a1a1a;">7.2</span>
<span class="t" style="left:1167.72px;top:836.91px;font-size:22.67px;color:#1a1a1a;transform:scaleX(0.8701);transform-origin:0 0;-webkit-text-stroke:0.5px #1a1a1a;">FLOOR</span>
<span class="t" style="left:1242.10px;top:836.91px;font-size:22.67px;color:#1a1a1a;transform:scaleX(1.0604);transform-origin:0 0;-webkit-text-stroke:0.5px #1a1a1a;">7</span>
<span class="t" style="left:1204.93px;top:859.61px;font-size:22.67px;color:#1a1a1a;transform:scaleX(1.0314);transform-origin:0 0;-webkit-text-stroke:0.5px #1a1a1a;">Flats</span>
<span class="t" style="left:1164.82px;top:882.24px;font-size:23.11px;color:#1a1a1a;transform:scaleX(1.0171);transform-origin:0 0;-webkit-text-stroke:0.5px #1a1a1a;">7.3</span>
<span class="t" style="left:1204.87px;top:885.81px;font-size:18.90px;color:#1a1a1a;transform:scaleX(0.9599);transform-origin:0 0;-webkit-text-stroke:0.5px #1a1a1a;">&amp;</span>
<span class="t" style="left:1221.79px;top:882.24px;font-size:23.11px;color:#1a1a1a;transform:scaleX(1.0484);transform-origin:0 0;-webkit-text-stroke:0.5px #1a1a1a;">7.4</span>
<div class="r" style="left:1045.90px;top:825.30px;width:20.00px;height:6.00px;background:#ffffff;"></div>
<span class="t" style="left:1046.37px;top:825.40px;font-size:5.61px;color:#1c1c1c;transform:scaleX(1.0154);transform-origin:0 0;-webkit-text-stroke:0.22px #1c1c1c;font-family:'Liberation Serif',serif;">500 mm</span>
<span class="t" style="left:1117.44px;top:868.10px;font-size:5.61px;color:#1c1c1c;transform:scaleX(0.9682);transform-origin:0 0;-webkit-text-stroke:0.22px #1c1c1c;font-family:'Liberation Serif',serif;">345 mm</span>
<div class="r" style="left:1199.15px;top:825.30px;width:20.00px;height:6.00px;background:#ffffff;"></div>
<span class="t" style="left:1199.62px;top:825.40px;font-size:5.61px;color:#1c1c1c;transform:scaleX(1.0154);transform-origin:0 0;-webkit-text-stroke:0.22px #1c1c1c;font-family:'Liberation Serif',serif;">500 mm</span>
<span class="t" style="left:1267.44px;top:868.10px;font-size:5.61px;color:#1c1c1c;transform:scaleX(0.9682);transform-origin:0 0;-webkit-text-stroke:0.22px #1c1c1c;font-family:'Liberation Serif',serif;">345 mm</span>
<div class="r" style="left:1001.00px;top:923.90px;width:111.00px;height:76.40px;background:#bbbbbd;"></div>
<div class="r" style="left:1154.00px;top:923.90px;width:111.50px;height:76.40px;background:#bbbbbd;"></div>
<span class="t" style="left:1010.62px;top:928.41px;font-size:22.67px;color:#1a1a1a;transform:scaleX(0.8701);transform-origin:0 0;-webkit-text-stroke:0.5px #1a1a1a;">FLOOR</span>
<span class="t" style="left:1085.24px;top:928.41px;font-size:22.67px;color:#1a1a1a;transform:scaleX(0.9987);transform-origin:0 0;-webkit-text-stroke:0.5px #1a1a1a;">8</span>
<span class="t" style="left:1010.32px;top:951.11px;font-size:22.67px;color:#1a1a1a;transform:scaleX(1.0357);transform-origin:0 0;-webkit-text-stroke:0.5px #1a1a1a;">Flats</span>
<span class="t" style="left:1011.21px;top:973.74px;font-size:23.11px;color:#1a1a1a;transform:scaleX(1.0085);transform-origin:0 0;-webkit-text-stroke:0.5px #1a1a1a;">8.1</span>
<span class="t" style="left:1050.37px;top:977.31px;font-size:18.90px;color:#1a1a1a;transform:scaleX(0.9599);transform-origin:0 0;-webkit-text-stroke:0.5px #1a1a1a;">&amp;</span>
<span class="t" style="left:1067.98px;top:973.74px;font-size:23.11px;color:#1a1a1a;transform:scaleX(1.0385);transform-origin:0 0;-webkit-text-stroke:0.5px #1a1a1a;">8.2</span>
<span class="t" style="left:1167.72px;top:928.41px;font-size:22.67px;color:#1a1a1a;transform:scaleX(0.8701);transform-origin:0 0;-webkit-text-stroke:0.5px #1a1a1a;">FLOOR</span>
<span class="t" style="left:1242.31px;top:928.41px;font-size:22.67px;color:#1a1a1a;transform:scaleX(1.0267);transform-origin:0 0;-webkit-text-stroke:0.5px #1a1a1a;">8</span>
<span class="t" style="left:1204.93px;top:951.11px;font-size:22.67px;color:#1a1a1a;transform:scaleX(1.0314);transform-origin:0 0;-webkit-text-stroke:0.5px #1a1a1a;">Flats</span>
<span class="t" style="left:1165.01px;top:973.74px;font-size:23.11px;color:#1a1a1a;transform:scaleX(1.0113);transform-origin:0 0;-webkit-text-stroke:0.5px #1a1a1a;">8.3</span>
<span class="t" style="left:1204.87px;top:977.31px;font-size:18.90px;color:#1a1a1a;transform:scaleX(0.9599);transform-origin:0 0;-webkit-text-stroke:0.5px #1a1a1a;">&amp;</span>
<span class="t" style="left:1221.98px;top:973.74px;font-size:23.11px;color:#1a1a1a;transform:scaleX(1.0424);transform-origin:0 0;-webkit-text-stroke:0.5px #1a1a1a;">8.4</span>
<div class="r" style="left:1045.90px;top:916.80px;width:20.00px;height:6.00px;background:#ffffff;"></div>
<span class="t" style="left:1046.37px;top:916.90px;font-size:5.61px;color:#1c1c1c;transform:scaleX(1.0154);transform-origin:0 0;-webkit-text-stroke:0.22px #1c1c1c;font-family:'Liberation Serif',serif;">500 mm</span>
<span class="t" style="left:1117.44px;top:959.60px;font-size:5.61px;color:#1c1c1c;transform:scaleX(0.9682);transform-origin:0 0;-webkit-text-stroke:0.22px #1c1c1c;font-family:'Liberation Serif',serif;">345 mm</span>
<div class="r" style="left:1199.15px;top:916.80px;width:20.00px;height:6.00px;background:#ffffff;"></div>
<span class="t" style="left:1199.62px;top:916.90px;font-size:5.61px;color:#1c1c1c;transform:scaleX(1.0154);transform-origin:0 0;-webkit-text-stroke:0.22px #1c1c1c;font-family:'Liberation Serif',serif;">500 mm</span>
<span class="t" style="left:1267.44px;top:959.60px;font-size:5.61px;color:#1c1c1c;transform:scaleX(0.9682);transform-origin:0 0;-webkit-text-stroke:0.22px #1c1c1c;font-family:'Liberation Serif',serif;">345 mm</span>
<div class="r" style="left:1319.30px;top:239.30px;width:234.00px;height:160.00px;border:1.3px solid #8dc0d3;"></div>
<span class="t" style="left:1381.87px;top:291.03px;font-size:31.98px;color:#5cabc9;transform:scaleX(1.0898);transform-origin:0 0;font-weight:700;">weald</span>
<span class="t" style="left:1341.30px;top:321.24px;font-size:25.00px;color:#858585;transform:scaleX(1.0159);transform-origin:0 0;">sign makers</span>
<span class="t" style="left:1321.30px;top:406.69px;font-size:11px;color:#666666;font-weight:700;letter-spacing:0.297px;">Client:</span>
<div class="r" style="left:1319.30px;top:418.00px;width:234.00px;height:32.70px;background:#ffffff;border:1.3px solid #8dc0d3;"></div>
<span class="t" style="left:1327.66px;top:426.71px;font-size:15.70px;color:#6a6a6a;transform:scaleX(1.0642);transform-origin:0 0;">Day &amp; Bell Surveyors Ltd</span>
<span class="t" style="left:1321.30px;top:457.79px;font-size:11px;color:#666666;font-weight:700;letter-spacing:0.728px;">Contact:</span>
<div class="r" style="left:1319.30px;top:470.80px;width:234.00px;height:32.80px;background:#ffffff;border:1.3px solid #8dc0d3;"></div>
<span class="t" style="left:1328.23px;top:479.21px;font-size:15.70px;color:#6a6a6a;transform:scaleX(1.0931);transform-origin:0 0;">Omur Payne</span>
<span class="t" style="left:1321.30px;top:508.69px;font-size:11px;color:#666666;font-weight:700;letter-spacing:0.689px;">Reference Number:</span>
<div class="r" style="left:1319.30px;top:523.30px;width:234.00px;height:32.70px;background:#ffffff;border:1.3px solid #8dc0d3;"></div>
<span class="t" style="left:1328.26px;top:531.31px;font-size:15.70px;color:#6a6a6a;transform:scaleX(1.0420);transform-origin:0 0;">Q2352</span>
<span class="t" style="left:1321.30px;top:559.09px;font-size:11px;color:#666666;font-weight:700;letter-spacing:0.024px;">Revision:</span>
<div class="r" style="left:1319.30px;top:570.40px;width:234.00px;height:32.80px;background:#ffffff;border:1.3px solid #8dc0d3;"></div>
<span class="t" style="left:1329.50px;top:577.69px;font-size:15.6px;color:#909090;">1</span>
<span class="t" style="left:1321.30px;top:610.29px;font-size:11px;color:#666666;font-weight:700;letter-spacing:0.371px;">Designer:</span>
<div class="r" style="left:1319.30px;top:623.70px;width:234.00px;height:32.80px;background:#ffffff;border:1.3px solid #8dc0d3;"></div>
<span class="t" style="left:1327.64px;top:631.71px;font-size:15.70px;color:#6a6a6a;transform:scaleX(1.0832);transform-origin:0 0;">Helen</span>
<span class="t" style="left:1321.30px;top:660.69px;font-size:11px;color:#666666;font-weight:700;letter-spacing:0.749px;">Date:</span>
<div class="r" style="left:1319.30px;top:676.10px;width:234.00px;height:32.90px;background:#ffffff;border:1.3px solid #8dc0d3;"></div>
<span class="t" style="left:1328.42px;top:684.21px;font-size:15.70px;color:#6a6a6a;transform:scaleX(0.9921);transform-origin:0 0;">07/01/2026</span>
<span class="t" style="left:1324.00px;top:718.90px;font-size:9.1px;color:#808080;word-spacing:2.962px;">Please check all aspects of the above artwork are</span>
<span class="t" style="left:1324.00px;top:729.63px;font-size:9.1px;color:#808080;word-spacing:2.879px;">correct, including but not limited to any dimensions</span>
<span class="t" style="left:1324.00px;top:740.36px;font-size:9.1px;color:#808080;word-spacing:11.347px;">given, template accuracy, colour, font and</span>
<span class="t" style="left:1324.00px;top:751.09px;font-size:9.1px;color:#808080;word-spacing:7.472px;">spelling. Once manufactured, Sign Makers UK</span>
<span class="t" style="left:1324.00px;top:761.82px;font-size:9.1px;color:#808080;word-spacing:3.242px;">(Kent) Ltd holds no responsibility for mistakes that</span>
<span class="t" style="left:1324.00px;top:772.55px;font-size:9.1px;color:#808080;word-spacing:6.565px;">appear in this artwork, therefore you may be</span>
<span class="t" style="left:1324.00px;top:783.28px;font-size:9.1px;color:#808080;word-spacing:3.314px;">subject to charges for any remedial works. Please</span>
<span class="t" style="left:1324.00px;top:794.01px;font-size:9.1px;color:#808080;word-spacing:4.626px;">note, colours on final product may differ to that</span>
<span class="t" style="left:1324.00px;top:804.74px;font-size:9.1px;color:#808080;word-spacing:4.035px;">shown on artwork, check colour references given.</span>
<span class="t" style="left:1324.00px;top:815.47px;font-size:9.1px;color:#808080;word-spacing:2.838px;">All designs are property of Sign Makers UK (Kent)</span>
<span class="t" style="left:1324.00px;top:826.20px;font-size:9.1px;color:#808080;word-spacing:3.089px;">Limited until paid in full. By approving this artwork</span>
<span class="t" style="left:1324.00px;top:836.93px;font-size:9.1px;color:#808080;">you agree to our Terms and Conditions.</span>
<span class="t" style="left:1325.00px;top:855.68px;font-size:24px;color:#c4302b;font-weight:700;letter-spacing:2.055px;">APPROVAL:</span>
<span class="t" style="left:1324.50px;top:886.31px;font-size:13.1px;color:#777777;word-spacing:5.453px;">Production will not commence until</span>
<span class="t" style="left:1324.50px;top:900.91px;font-size:13.1px;color:#777777;word-spacing:5.093px;">formal artwork approval is recieved</span>
<span class="t" style="left:1324.50px;top:914.91px;font-size:13.1px;color:#777777;">and recorded below.</span>
<div class="r" style="left:1321.40px;top:936.20px;width:237.00px;height:158.80px;background:#ffffff;border:1.5px solid #858585;"></div>
<span class="t" style="left:1338.70px;top:954.67px;font-size:12.2px;color:#777;letter-spacing:0.737px;">Approved by:</span>
<span class="t" style="left:1338.70px;top:997.67px;font-size:12.2px;color:#777;letter-spacing:0.585px;">Date:</span>
<span class="t" style="left:1338.70px;top:1040.17px;font-size:12.2px;color:#777;letter-spacing:0.694px;">Option:</span>
<span class="t" style="left:124.30px;top:1032.85px;font-size:23.8px;color:#c5302c;font-weight:700;letter-spacing:2.614px;">CHECK ARTWORK FOR ACCURACY, ONCE APPROVED AMENDS ARE CHARGEABLE</span>
<span class="t" style="left:238.30px;top:1070.79px;font-size:15.6px;color:#858585;letter-spacing:0.484px;">If you need to make any changes prior to approval, please contact us:</span>
<span class="t" style="left:756.90px;top:1070.79px;font-size:15.6px;color:#858585;font-weight:700;letter-spacing:-0.250px;">01892 362 395</span>
<span class="t" style="left:862.40px;top:1070.79px;font-size:15.6px;color:#858585;letter-spacing:0.302px;">or email</span>
<span class="t" style="left:924.40px;top:1070.79px;font-size:15.6px;color:#858585;font-weight:700;letter-spacing:-0.284px;">hello@team.signmakersuk.com</span>
<svg class="r" style="left:0;top:0;pointer-events:none" width="1946" height="1220" viewBox="0 0 1946 1220"><polygon points="253.28,388.18 261.10,388.18 269.23,396.25 261.10,404.62 253.28,404.62 259.50,398.98 250.57,398.98 250.57,393.82 259.50,393.82" fill="none" stroke="#1a1a1a" stroke-width="1.15" stroke-linejoin="miter"/><polygon points="253.62,438.97 261.28,438.97 269.23,447.00 261.28,455.32 253.62,455.32 259.71,449.71 250.97,449.71 250.97,444.59 259.71,444.59" fill="none" stroke="#1a1a1a" stroke-width="1.15" stroke-linejoin="miter"/><polygon points="243.72,667.28 251.38,667.28 259.32,675.21 251.38,683.42 243.72,683.42 249.81,677.88 241.07,677.88 241.07,672.82 249.81,672.82" fill="none" stroke="#1a1a1a" stroke-width="1.15" stroke-linejoin="miter"/><polygon points="253.62,745.78 261.28,745.78 269.23,753.76 261.28,762.02 253.62,762.02 259.71,756.45 250.97,756.45 250.97,751.35 259.71,751.35" fill="none" stroke="#1a1a1a" stroke-width="1.15" stroke-linejoin="miter"/><path d="M143.2 351.0 H277.5 M143.2 349.0 V353.0 M277.5 349.0 V353.0 M143.2 351.0 l2.2 -0.9 M143.2 351.0 l2.2 0.9 M277.5 351.0 l-2.2 -0.9 M277.5 351.0 l-2.2 0.9" stroke="#a6a6a6" stroke-width="0.6" fill="none"/><path d="M288.5 355.5 V412.3 M286.5 355.5 H290.5 M286.5 412.3 H290.5 M288.5 355.5 l-0.9 2.2 M288.5 355.5 l0.9 2.2 M288.5 412.3 l-0.9 -2.2 M288.5 412.3 l0.9 -2.2" stroke="#a6a6a6" stroke-width="0.6" fill="none"/><path d="M143.2 426.3 H277.5 M143.2 424.3 V428.3 M277.5 424.3 V428.3 M143.2 426.3 l2.2 -0.9 M143.2 426.3 l2.2 0.9 M277.5 426.3 l-2.2 -0.9 M277.5 426.3 l-2.2 0.9" stroke="#a6a6a6" stroke-width="0.6" fill="none"/><path d="M288.5 431.5 V488.3 M286.5 431.5 H290.5 M286.5 488.3 H290.5 M288.5 431.5 l-0.9 2.2 M288.5 431.5 l0.9 2.2 M288.5 488.3 l-0.9 -2.2 M288.5 488.3 l0.9 -2.2" stroke="#a6a6a6" stroke-width="0.6" fill="none"/><path d="M143.2 501.0 H277.5 M143.2 499.0 V503.0 M277.5 499.0 V503.0 M143.2 501.0 l2.2 -0.9 M143.2 501.0 l2.2 0.9 M277.5 501.0 l-2.2 -0.9 M277.5 501.0 l-2.2 0.9" stroke="#a6a6a6" stroke-width="0.6" fill="none"/><path d="M288.5 506.8 V563.6 M286.5 506.8 H290.5 M286.5 563.6 H290.5 M288.5 506.8 l-0.9 2.2 M288.5 506.8 l0.9 2.2 M288.5 563.6 l-0.9 -2.2 M288.5 563.6 l0.9 -2.2" stroke="#a6a6a6" stroke-width="0.6" fill="none"/><path d="M143.2 578.4 H277.5 M143.2 576.4 V580.4 M277.5 576.4 V580.4 M143.2 578.4 l2.2 -0.9 M143.2 578.4 l2.2 0.9 M277.5 578.4 l-2.2 -0.9 M277.5 578.4 l-2.2 0.9" stroke="#a6a6a6" stroke-width="0.6" fill="none"/><path d="M288.5 583.3 V640.0999999999999 M286.5 583.3 H290.5 M286.5 640.0999999999999 H290.5 M288.5 583.3 l-0.9 2.2 M288.5 583.3 l0.9 2.2 M288.5 640.0999999999999 l-0.9 -2.2 M288.5 640.0999999999999 l0.9 -2.2" stroke="#a6a6a6" stroke-width="0.6" fill="none"/><path d="M143.2 655.1999999999999 H277.5 M143.2 653.1999999999999 V657.1999999999999 M277.5 653.1999999999999 V657.1999999999999 M143.2 655.1999999999999 l2.2 -0.9 M143.2 655.1999999999999 l2.2 0.9 M277.5 655.1999999999999 l-2.2 -0.9 M277.5 655.1999999999999 l-2.2 0.9" stroke="#a6a6a6" stroke-width="0.6" fill="none"/><path d="M288.5 659.8 V716.5999999999999 M286.5 659.8 H290.5 M286.5 716.5999999999999 H290.5 M288.5 659.8 l-0.9 2.2 M288.5 659.8 l0.9 2.2 M288.5 716.5999999999999 l-0.9 -2.2 M288.5 716.5999999999999 l0.9 -2.2" stroke="#a6a6a6" stroke-width="0.6" fill="none"/><path d="M143.2 732.9000000000001 H277.5 M143.2 730.9000000000001 V734.9000000000001 M277.5 730.9000000000001 V734.9000000000001 M143.2 732.9000000000001 l2.2 -0.9 M143.2 732.9000000000001 l2.2 0.9 M277.5 732.9000000000001 l-2.2 -0.9 M277.5 732.9000000000001 l-2.2 0.9" stroke="#a6a6a6" stroke-width="0.6" fill="none"/><path d="M288.5 738.2 V795.0 M286.5 738.2 H290.5 M286.5 795.0 H290.5 M288.5 738.2 l-0.9 2.2 M288.5 738.2 l0.9 2.2 M288.5 795.0 l-0.9 -2.2 M288.5 795.0 l0.9 -2.2" stroke="#a6a6a6" stroke-width="0.6" fill="none"/><polygon points="464.00,363.88 471.56,363.88 479.43,371.86 471.56,380.12 464.00,380.12 470.01,374.55 461.38,374.55 461.38,369.45 470.01,369.45" fill="none" stroke="#1a1a1a" stroke-width="1.15" stroke-linejoin="miter"/><path d="M342.5 352.2 H487.6 M342.5 350.2 V354.2 M487.6 350.2 V354.2 M342.5 352.2 l2.2 -0.9 M342.5 352.2 l2.2 0.9 M487.6 352.2 l-2.2 -0.9 M487.6 352.2 l-2.2 0.9" stroke="#a6a6a6" stroke-width="0.6" fill="none"/><path d="M499.6 356.3 V433.5 M497.6 356.3 H501.6 M497.6 433.5 H501.6 M499.6 356.3 l-0.9 2.2 M499.6 356.3 l0.9 2.2 M499.6 433.5 l-0.9 -2.2 M499.6 433.5 l0.9 -2.2" stroke="#a6a6a6" stroke-width="0.6" fill="none"/><polygon points="464.00,455.68 471.56,455.68 479.43,463.66 471.56,471.93 464.00,471.93 470.01,466.35 461.38,466.35 461.38,461.25 470.01,461.25" fill="none" stroke="#1a1a1a" stroke-width="1.15" stroke-linejoin="miter"/><path d="M342.5 443.6 H487.6 M342.5 441.6 V445.6 M487.6 441.6 V445.6 M342.5 443.6 l2.2 -0.9 M342.5 443.6 l2.2 0.9 M487.6 443.6 l-2.2 -0.9 M487.6 443.6 l-2.2 0.9" stroke="#a6a6a6" stroke-width="0.6" fill="none"/><path d="M499.6 448.1 V525.3000000000001 M497.6 448.1 H501.6 M497.6 525.3000000000001 H501.6 M499.6 448.1 l-0.9 2.2 M499.6 448.1 l0.9 2.2 M499.6 525.3000000000001 l-0.9 -2.2 M499.6 525.3000000000001 l0.9 -2.2" stroke="#a6a6a6" stroke-width="0.6" fill="none"/><polygon points="464.00,548.48 471.56,548.48 479.43,556.46 471.56,564.72 464.00,564.72 470.01,559.15 461.38,559.15 461.38,554.05 470.01,554.05" fill="none" stroke="#1a1a1a" stroke-width="1.15" stroke-linejoin="miter"/><path d="M342.5 537.1999999999999 H487.6 M342.5 535.1999999999999 V539.1999999999999 M487.6 535.1999999999999 V539.1999999999999 M342.5 537.1999999999999 l2.2 -0.9 M342.5 537.1999999999999 l2.2 0.9 M487.6 537.1999999999999 l-2.2 -0.9 M487.6 537.1999999999999 l-2.2 0.9" stroke="#a6a6a6" stroke-width="0.6" fill="none"/><path d="M499.6 540.9 V618.1 M497.6 540.9 H501.6 M497.6 618.1 H501.6 M499.6 540.9 l-0.9 2.2 M499.6 540.9 l0.9 2.2 M499.6 618.1 l-0.9 -2.2 M499.6 618.1 l0.9 -2.2" stroke="#a6a6a6" stroke-width="0.6" fill="none"/><polygon points="464.00,641.08 471.56,641.08 479.43,649.06 471.56,657.32 464.00,657.32 470.01,651.75 461.38,651.75 461.38,646.65 470.01,646.65" fill="none" stroke="#1a1a1a" stroke-width="1.15" stroke-linejoin="miter"/><path d="M342.5 630.2 H487.6 M342.5 628.2 V632.2 M487.6 628.2 V632.2 M342.5 630.2 l2.2 -0.9 M342.5 630.2 l2.2 0.9 M487.6 630.2 l-2.2 -0.9 M487.6 630.2 l-2.2 0.9" stroke="#a6a6a6" stroke-width="0.6" fill="none"/><path d="M499.6 633.5 V710.7 M497.6 633.5 H501.6 M497.6 710.7 H501.6 M499.6 633.5 l-0.9 2.2 M499.6 633.5 l0.9 2.2 M499.6 710.7 l-0.9 -2.2 M499.6 710.7 l0.9 -2.2" stroke="#a6a6a6" stroke-width="0.6" fill="none"/><polygon points="464.00,733.08 471.56,733.08 479.43,741.06 471.56,749.32 464.00,749.32 470.01,743.75 461.38,743.75 461.38,738.65 470.01,738.65" fill="none" stroke="#1a1a1a" stroke-width="1.15" stroke-linejoin="miter"/><path d="M342.5 722.2 H487.6 M342.5 720.2 V724.2 M487.6 720.2 V724.2 M342.5 722.2 l2.2 -0.9 M342.5 722.2 l2.2 0.9 M487.6 722.2 l-2.2 -0.9 M487.6 722.2 l-2.2 0.9" stroke="#a6a6a6" stroke-width="0.6" fill="none"/><path d="M499.6 725.5 V802.7 M497.6 725.5 H501.6 M497.6 802.7 H501.6 M499.6 725.5 l-0.9 2.2 M499.6 725.5 l0.9 2.2 M499.6 802.7 l-0.9 -2.2 M499.6 802.7 l0.9 -2.2" stroke="#a6a6a6" stroke-width="0.6" fill="none"/><polygon points="663.24,385.68 670.93,385.68 678.92,393.61 670.93,401.82 663.24,401.82 669.36,396.28 660.58,396.28 660.58,391.22 669.36,391.22" fill="none" stroke="#1a1a1a" stroke-width="1.15" stroke-linejoin="miter"/><path d="M560.5,424.4 L560.5,412.3 L565.4,407.7 L565.4,416 L571.6,409.6 L575.3,413.3 L569.1,419.4 L577.1,419.4 L572.2,424.4 Z" fill="none" stroke="#1a1a1a" stroke-width="1.15"/><path d="M552.8 351.4 H686.7 M552.8 349.4 V353.4 M686.7 349.4 V353.4 M552.8 351.4 l2.2 -0.9 M552.8 351.4 l2.2 0.9 M686.7 351.4 l-2.2 -0.9 M686.7 351.4 l-2.2 0.9" stroke="#a6a6a6" stroke-width="0.6" fill="none"/><path d="M698.2 355.5 V432.3 M696.2 355.5 H700.2 M696.2 432.3 H700.2 M698.2 355.5 l-0.9 2.2 M698.2 355.5 l0.9 2.2 M698.2 432.3 l-0.9 -2.2 M698.2 432.3 l0.9 -2.2" stroke="#a6a6a6" stroke-width="0.6" fill="none"/><polygon points="856.75,388.97 864.20,388.97 871.92,396.91 864.20,405.12 856.75,405.12 862.67,399.58 854.18,399.58 854.18,394.52 862.67,394.52" fill="none" stroke="#1a1a1a" stroke-width="1.15" stroke-linejoin="miter"/><polygon points="792.00,462.38 784.44,462.38 776.58,470.31 784.44,478.53 792.00,478.53 785.99,472.98 794.62,472.98 794.62,467.92 785.99,467.92" fill="none" stroke="#1a1a1a" stroke-width="1.15" stroke-linejoin="miter"/><path d="M768.6 352.7 H880 M768.6 350.7 V354.7 M880 350.7 V354.7 M768.6 352.7 l2.2 -0.9 M768.6 352.7 l2.2 0.9 M880 352.7 l-2.2 -0.9 M880 352.7 l-2.2 0.9" stroke="#a6a6a6" stroke-width="0.6" fill="none"/><path d="M893.6 356.3 V412.7 M891.6 356.3 H895.6 M891.6 412.7 H895.6 M893.6 356.3 l-0.9 2.2 M893.6 356.3 l0.9 2.2 M893.6 412.7 l-0.9 -2.2 M893.6 412.7 l0.9 -2.2" stroke="#a6a6a6" stroke-width="0.6" fill="none"/><path d="M768.6 426.1 H880 M768.6 424.1 V428.1 M880 424.1 V428.1 M768.6 426.1 l2.2 -0.9 M768.6 426.1 l2.2 0.9 M880 426.1 l-2.2 -0.9 M880 426.1 l-2.2 0.9" stroke="#a6a6a6" stroke-width="0.6" fill="none"/><path d="M892.8 429.6 V486.0 M890.8 429.6 H894.8 M890.8 486.0 H894.8 M892.8 429.6 l-0.9 2.2 M892.8 429.6 l0.9 2.2 M892.8 486.0 l-0.9 -2.2 M892.8 486.0 l0.9 -2.2" stroke="#a6a6a6" stroke-width="0.6" fill="none"/><path d="M768.6 504.59999999999997 H880 M768.6 502.59999999999997 V506.59999999999997 M880 502.59999999999997 V506.59999999999997 M768.6 504.59999999999997 l2.2 -0.9 M768.6 504.59999999999997 l2.2 0.9 M880 504.59999999999997 l-2.2 -0.9 M880 504.59999999999997 l-2.2 0.9" stroke="#a6a6a6" stroke-width="0.6" fill="none"/><path d="M891.1 508.7 V565.1 M889.1 508.7 H893.1 M889.1 565.1 H893.1 M891.1 508.7 l-0.9 2.2 M891.1 508.7 l0.9 2.2 M891.1 565.1 l-0.9 -2.2 M891.1 565.1 l0.9 -2.2" stroke="#a6a6a6" stroke-width="0.6" fill="none"/><polygon points="1080.35,385.67 1087.80,385.67 1095.52,393.61 1087.80,401.82 1080.35,401.82 1086.27,396.28 1077.78,396.28 1077.78,391.22 1086.27,391.22" fill="none" stroke="#1a1a1a" stroke-width="1.15" stroke-linejoin="miter"/><polygon points="1182.00,385.67 1174.44,385.67 1166.58,393.61 1174.44,401.82 1182.00,401.82 1175.99,396.28 1184.62,396.28 1184.62,391.22 1175.99,391.22" fill="none" stroke="#1a1a1a" stroke-width="1.15" stroke-linejoin="miter"/><path d="M1001 351.09999999999997 H1112 M1001 349.09999999999997 V353.09999999999997 M1112 349.09999999999997 V353.09999999999997 M1001 351.09999999999997 l2.2 -0.9 M1001 351.09999999999997 l2.2 0.9 M1112 351.09999999999997 l-2.2 -0.9 M1112 351.09999999999997 l-2.2 0.9" stroke="#a6a6a6" stroke-width="0.6" fill="none"/><path d="M1126.5 355.2 V431.6 M1124.5 355.2 H1128.5 M1124.5 431.6 H1128.5 M1126.5 355.2 l-0.9 2.2 M1126.5 355.2 l0.9 2.2 M1126.5 431.6 l-0.9 -2.2 M1126.5 431.6 l0.9 -2.2" stroke="#a6a6a6" stroke-width="0.6" fill="none"/><path d="M1154 351.09999999999997 H1265.5 M1154 349.09999999999997 V353.09999999999997 M1265.5 349.09999999999997 V353.09999999999997 M1154 351.09999999999997 l2.2 -0.9 M1154 351.09999999999997 l2.2 0.9 M1265.5 351.09999999999997 l-2.2 -0.9 M1265.5 351.09999999999997 l-2.2 0.9" stroke="#a6a6a6" stroke-width="0.6" fill="none"/><path d="M1276.5 355.2 V431.6 M1274.5 355.2 H1278.5 M1274.5 431.6 H1278.5 M1276.5 355.2 l-0.9 2.2 M1276.5 355.2 l0.9 2.2 M1276.5 431.6 l-0.9 -2.2 M1276.5 431.6 l0.9 -2.2" stroke="#a6a6a6" stroke-width="0.6" fill="none"/><polygon points="1080.35,479.87 1087.80,479.87 1095.52,487.81 1087.80,496.02 1080.35,496.02 1086.27,490.48 1077.78,490.48 1077.78,485.42 1086.27,485.42" fill="none" stroke="#1a1a1a" stroke-width="1.15" stroke-linejoin="miter"/><polygon points="1182.00,479.87 1174.44,479.87 1166.58,487.81 1174.44,496.02 1182.00,496.02 1175.99,490.48 1184.62,490.48 1184.62,485.42 1175.99,485.42" fill="none" stroke="#1a1a1a" stroke-width="1.15" stroke-linejoin="miter"/><path d="M1001 445.29999999999995 H1112 M1001 443.29999999999995 V447.29999999999995 M1112 443.29999999999995 V447.29999999999995 M1001 445.29999999999995 l2.2 -0.9 M1001 445.29999999999995 l2.2 0.9 M1112 445.29999999999995 l-2.2 -0.9 M1112 445.29999999999995 l-2.2 0.9" stroke="#a6a6a6" stroke-width="0.6" fill="none"/><path d="M1126.5 449.4 V525.8 M1124.5 449.4 H1128.5 M1124.5 525.8 H1128.5 M1126.5 449.4 l-0.9 2.2 M1126.5 449.4 l0.9 2.2 M1126.5 525.8 l-0.9 -2.2 M1126.5 525.8 l0.9 -2.2" stroke="#a6a6a6" stroke-width="0.6" fill="none"/><path d="M1154 445.29999999999995 H1265.5 M1154 443.29999999999995 V447.29999999999995 M1265.5 443.29999999999995 V447.29999999999995 M1154 445.29999999999995 l2.2 -0.9 M1154 445.29999999999995 l2.2 0.9 M1265.5 445.29999999999995 l-2.2 -0.9 M1265.5 445.29999999999995 l-2.2 0.9" stroke="#a6a6a6" stroke-width="0.6" fill="none"/><path d="M1276.5 449.4 V525.8 M1274.5 449.4 H1278.5 M1274.5 525.8 H1278.5 M1276.5 449.4 l-0.9 2.2 M1276.5 449.4 l0.9 2.2 M1276.5 525.8 l-0.9 -2.2 M1276.5 525.8 l0.9 -2.2" stroke="#a6a6a6" stroke-width="0.6" fill="none"/><polygon points="1080.35,573.98 1087.80,573.98 1095.52,581.91 1087.80,590.12 1080.35,590.12 1086.27,584.58 1077.78,584.58 1077.78,579.52 1086.27,579.52" fill="none" stroke="#1a1a1a" stroke-width="1.15" stroke-linejoin="miter"/><polygon points="1182.00,573.98 1174.44,573.98 1166.58,581.91 1174.44,590.12 1182.00,590.12 1175.99,584.58 1184.62,584.58 1184.62,579.52 1175.99,579.52" fill="none" stroke="#1a1a1a" stroke-width="1.15" stroke-linejoin="miter"/><path d="M1001 539.4 H1112 M1001 537.4 V541.4 M1112 537.4 V541.4 M1001 539.4 l2.2 -0.9 M1001 539.4 l2.2 0.9 M1112 539.4 l-2.2 -0.9 M1112 539.4 l-2.2 0.9" stroke="#a6a6a6" stroke-width="0.6" fill="none"/><path d="M1126.5 543.5 V619.9 M1124.5 543.5 H1128.5 M1124.5 619.9 H1128.5 M1126.5 543.5 l-0.9 2.2 M1126.5 543.5 l0.9 2.2 M1126.5 619.9 l-0.9 -2.2 M1126.5 619.9 l0.9 -2.2" stroke="#a6a6a6" stroke-width="0.6" fill="none"/><path d="M1154 539.4 H1265.5 M1154 537.4 V541.4 M1265.5 537.4 V541.4 M1154 539.4 l2.2 -0.9 M1154 539.4 l2.2 0.9 M1265.5 539.4 l-2.2 -0.9 M1265.5 539.4 l-2.2 0.9" stroke="#a6a6a6" stroke-width="0.6" fill="none"/><path d="M1276.5 543.5 V619.9 M1274.5 543.5 H1278.5 M1274.5 619.9 H1278.5 M1276.5 543.5 l-0.9 2.2 M1276.5 543.5 l0.9 2.2 M1276.5 619.9 l-0.9 -2.2 M1276.5 619.9 l0.9 -2.2" stroke="#a6a6a6" stroke-width="0.6" fill="none"/><polygon points="1082.02,687.28 1089.68,687.28 1097.62,695.30 1089.68,703.62 1082.02,703.62 1088.11,698.01 1079.38,698.01 1079.38,692.89 1088.11,692.89" fill="none" stroke="#1a1a1a" stroke-width="1.15" stroke-linejoin="miter"/><polygon points="1182.00,665.18 1174.44,665.18 1166.58,673.11 1174.44,681.33 1182.00,681.33 1175.99,675.78 1184.62,675.78 1184.62,670.72 1175.99,670.72" fill="none" stroke="#1a1a1a" stroke-width="1.15" stroke-linejoin="miter"/><path d="M1001 630.6 H1112 M1001 628.6 V632.6 M1112 628.6 V632.6 M1001 630.6 l2.2 -0.9 M1001 630.6 l2.2 0.9 M1112 630.6 l-2.2 -0.9 M1112 630.6 l-2.2 0.9" stroke="#a6a6a6" stroke-width="0.6" fill="none"/><path d="M1126.5 634.7 V711.1 M1124.5 634.7 H1128.5 M1124.5 711.1 H1128.5 M1126.5 634.7 l-0.9 2.2 M1126.5 634.7 l0.9 2.2 M1126.5 711.1 l-0.9 -2.2 M1126.5 711.1 l0.9 -2.2" stroke="#a6a6a6" stroke-width="0.6" fill="none"/><path d="M1154 630.6 H1265.5 M1154 628.6 V632.6 M1265.5 628.6 V632.6 M1154 630.6 l2.2 -0.9 M1154 630.6 l2.2 0.9 M1265.5 630.6 l-2.2 -0.9 M1265.5 630.6 l-2.2 0.9" stroke="#a6a6a6" stroke-width="0.6" fill="none"/><path d="M1276.5 634.7 V711.1 M1274.5 634.7 H1278.5 M1274.5 711.1 H1278.5 M1276.5 634.7 l-0.9 2.2 M1276.5 634.7 l0.9 2.2 M1276.5 711.1 l-0.9 -2.2 M1276.5 711.1 l0.9 -2.2" stroke="#a6a6a6" stroke-width="0.6" fill="none"/><polygon points="1083.31,786.78 1090.92,786.78 1098.83,794.80 1090.92,803.12 1083.31,803.12 1089.36,797.51 1080.67,797.51 1080.67,792.39 1089.36,792.39" fill="none" stroke="#1a1a1a" stroke-width="1.15" stroke-linejoin="miter"/><polygon points="1182.00,764.68 1174.44,764.68 1166.58,772.61 1174.44,780.83 1182.00,780.83 1175.99,775.28 1184.62,775.28 1184.62,770.22 1175.99,770.22" fill="none" stroke="#1a1a1a" stroke-width="1.15" stroke-linejoin="miter"/><path d="M1001 730.1 H1112 M1001 728.1 V732.1 M1112 728.1 V732.1 M1001 730.1 l2.2 -0.9 M1001 730.1 l2.2 0.9 M1112 730.1 l-2.2 -0.9 M1112 730.1 l-2.2 0.9" stroke="#a6a6a6" stroke-width="0.6" fill="none"/><path d="M1126.5 734.2 V810.6 M1124.5 734.2 H1128.5 M1124.5 810.6 H1128.5 M1126.5 734.2 l-0.9 2.2 M1126.5 734.2 l0.9 2.2 M1126.5 810.6 l-0.9 -2.2 M1126.5 810.6 l0.9 -2.2" stroke="#a6a6a6" stroke-width="0.6" fill="none"/><path d="M1154 730.1 H1265.5 M1154 728.1 V732.1 M1265.5 728.1 V732.1 M1154 730.1 l2.2 -0.9 M1154 730.1 l2.2 0.9 M1265.5 730.1 l-2.2 -0.9 M1265.5 730.1 l-2.2 0.9" stroke="#a6a6a6" stroke-width="0.6" fill="none"/><path d="M1276.5 734.2 V810.6 M1274.5 734.2 H1278.5 M1274.5 810.6 H1278.5 M1276.5 734.2 l-0.9 2.2 M1276.5 734.2 l0.9 2.2 M1276.5 810.6 l-0.9 -2.2 M1276.5 810.6 l0.9 -2.2" stroke="#a6a6a6" stroke-width="0.6" fill="none"/><polygon points="1080.35,862.88 1087.80,862.88 1095.52,870.81 1087.80,879.02 1080.35,879.02 1086.27,873.48 1077.78,873.48 1077.78,868.42 1086.27,868.42" fill="none" stroke="#1a1a1a" stroke-width="1.15" stroke-linejoin="miter"/><polygon points="1182.00,862.88 1174.44,862.88 1166.58,870.81 1174.44,879.02 1182.00,879.02 1175.99,873.48 1184.62,873.48 1184.62,868.42 1175.99,868.42" fill="none" stroke="#1a1a1a" stroke-width="1.15" stroke-linejoin="miter"/><path d="M1001 828.3 H1112 M1001 826.3 V830.3 M1112 826.3 V830.3 M1001 828.3 l2.2 -0.9 M1001 828.3 l2.2 0.9 M1112 828.3 l-2.2 -0.9 M1112 828.3 l-2.2 0.9" stroke="#a6a6a6" stroke-width="0.6" fill="none"/><path d="M1126.5 832.4 V908.8 M1124.5 832.4 H1128.5 M1124.5 908.8 H1128.5 M1126.5 832.4 l-0.9 2.2 M1126.5 832.4 l0.9 2.2 M1126.5 908.8 l-0.9 -2.2 M1126.5 908.8 l0.9 -2.2" stroke="#a6a6a6" stroke-width="0.6" fill="none"/><path d="M1154 828.3 H1265.5 M1154 826.3 V830.3 M1265.5 826.3 V830.3 M1154 828.3 l2.2 -0.9 M1154 828.3 l2.2 0.9 M1265.5 828.3 l-2.2 -0.9 M1265.5 828.3 l-2.2 0.9" stroke="#a6a6a6" stroke-width="0.6" fill="none"/><path d="M1276.5 832.4 V908.8 M1274.5 832.4 H1278.5 M1274.5 908.8 H1278.5 M1276.5 832.4 l-0.9 2.2 M1276.5 832.4 l0.9 2.2 M1276.5 908.8 l-0.9 -2.2 M1276.5 908.8 l0.9 -2.2" stroke="#a6a6a6" stroke-width="0.6" fill="none"/><polygon points="1080.35,954.38 1087.80,954.38 1095.52,962.31 1087.80,970.52 1080.35,970.52 1086.27,964.98 1077.78,964.98 1077.78,959.92 1086.27,959.92" fill="none" stroke="#1a1a1a" stroke-width="1.15" stroke-linejoin="miter"/><polygon points="1182.00,954.38 1174.44,954.38 1166.58,962.31 1174.44,970.52 1182.00,970.52 1175.99,964.98 1184.62,964.98 1184.62,959.92 1175.99,959.92" fill="none" stroke="#1a1a1a" stroke-width="1.15" stroke-linejoin="miter"/><path d="M1001 919.8 H1112 M1001 917.8 V921.8 M1112 917.8 V921.8 M1001 919.8 l2.2 -0.9 M1001 919.8 l2.2 0.9 M1112 919.8 l-2.2 -0.9 M1112 919.8 l-2.2 0.9" stroke="#a6a6a6" stroke-width="0.6" fill="none"/><path d="M1126.5 923.9 V1000.3 M1124.5 923.9 H1128.5 M1124.5 1000.3 H1128.5 M1126.5 923.9 l-0.9 2.2 M1126.5 923.9 l0.9 2.2 M1126.5 1000.3 l-0.9 -2.2 M1126.5 1000.3 l0.9 -2.2" stroke="#a6a6a6" stroke-width="0.6" fill="none"/><path d="M1154 919.8 H1265.5 M1154 917.8 V921.8 M1265.5 917.8 V921.8 M1154 919.8 l2.2 -0.9 M1154 919.8 l2.2 0.9 M1265.5 919.8 l-2.2 -0.9 M1265.5 919.8 l-2.2 0.9" stroke="#a6a6a6" stroke-width="0.6" fill="none"/><path d="M1276.5 923.9 V1000.3 M1274.5 923.9 H1278.5 M1274.5 1000.3 H1278.5 M1276.5 923.9 l-0.9 2.2 M1276.5 923.9 l0.9 2.2 M1276.5 1000.3 l-0.9 -2.2 M1276.5 1000.3 l0.9 -2.2" stroke="#a6a6a6" stroke-width="0.6" fill="none"/><polygon points="1485.3,294.7 1507.5,294.7 1527.2,318.1 1507.5,341.5 1485.3,341.5" fill="#5cabc9"/></svg>
</body></html>
